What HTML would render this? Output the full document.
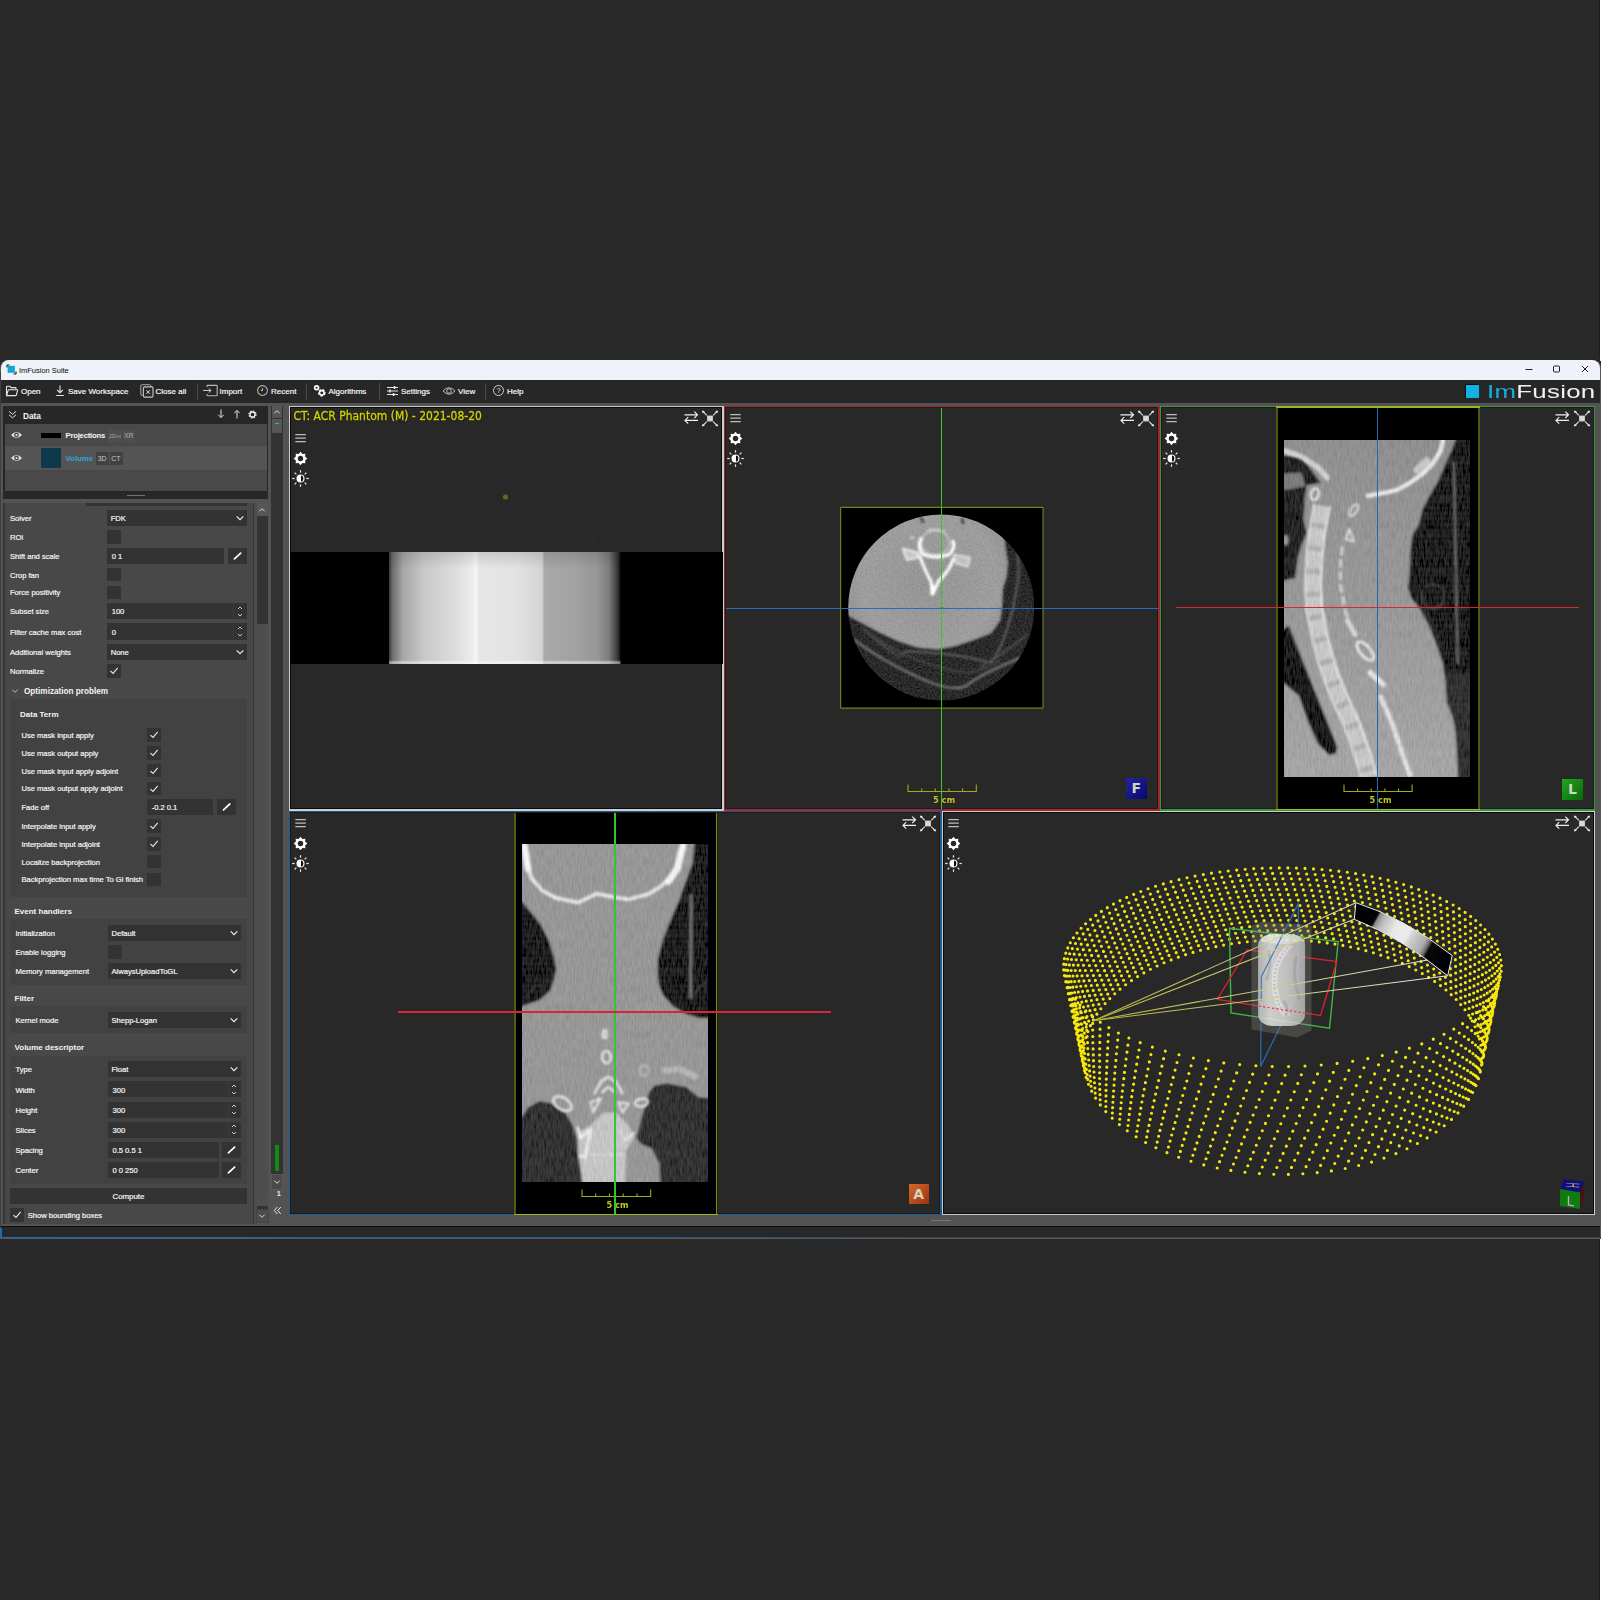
<!DOCTYPE html>
<html lang="en"><head><meta charset="utf-8"><title>ImFusion Suite</title>
<style>
html,body{margin:0;padding:0}
body{width:1601px;height:1600px;background:#282828;position:relative;overflow:hidden;font-family:"Liberation Sans",sans-serif;}
div,span,svg{position:absolute;display:block}
.t{font-size:7.6px;line-height:12px;color:#fafafa;white-space:nowrap;letter-spacing:-0.02px;-webkit-text-stroke:0.2px #f0f0f0}
.tb{font-size:8px;line-height:12px;color:#f8f8f8;white-space:nowrap;-webkit-text-stroke:0.2px #f0f0f0}
.h{font-size:8.1px;line-height:12px;color:#f4f4f4;white-space:nowrap;font-weight:bold}
.dv{font-family:"DejaVu Sans",sans-serif;white-space:nowrap}
</style></head>
<body>
<div style="left:0px;top:360px;width:1601px;height:878.7px;background:#585858;border-radius:8px 8px 0 0"></div>
<div style="left:0px;top:372px;width:1px;height:866px;background:#404040;"></div>
<div style="left:1px;top:360px;width:1599px;height:878px;background:#535353;border-radius:8px 8px 0 0"></div>
<div style="left:1px;top:360px;width:1599px;height:19.6px;background:#eff3f9;border-radius:8px 8px 0 0"></div>
<svg style="left:6px;top:364px;" width="11" height="11" viewBox="0 0 11 11"><path d="M1 1l2.5 0M1 1l0 2.5M10 10l-2.5 0M10 10l0-2.5" stroke="#222" stroke-width="1.2" fill="none"/><rect x="1.6" y="1.8" width="7.3" height="7" fill="#10a8d8"/></svg>
<span class="t" style="left:19px;top:364.80px;color:#0a0a0a;font-size:7.5px;-webkit-text-stroke:0">ImFusion Suite</span>
<svg style="left:1520px;top:361.3px;" width="75" height="16" viewBox="0 0 75 16"><path d="M5.5 8.5h7" stroke="#222" stroke-width="1"/><rect x="33.5" y="5" width="6" height="6" rx="1" fill="none" stroke="#222" stroke-width="1"/><path d="M62 5l6 6M68 5l-6 6" stroke="#222" stroke-width="1"/></svg>
<div style="left:1px;top:379.6px;width:1599px;height:23.4px;background:#272727;"></div>
<svg style="left:5px;top:384px;" width="14" height="14" viewBox="0 0 14 14"><path d="M1.5 11.5V3.2q0-.9.9-.9h2.4l1.2 1.3h4.2q.8 0 .8.8v1" fill="none" stroke="#e8e8e8" stroke-width="1.1"/><path d="M1.6 11.6l1.5-5.2q.2-.6.9-.6h8q.9 0 .6.9l-1.3 4.3q-.2.6-.9.6z" fill="none" stroke="#e8e8e8" stroke-width="1.1"/></svg>
<span class="tb" style="left:21px;top:386.10px;">Open</span>
<svg style="left:54px;top:384px;" width="12" height="14" viewBox="0 0 12 14"><path d="M6 1.5v7M3.2 6L6 8.8 8.8 6M2.2 11.5h7.6" fill="none" stroke="#e8e8e8" stroke-width="1.1"/></svg>
<span class="tb" style="left:68px;top:386.10px;">Save Workspace</span>
<svg style="left:139px;top:383px;" width="16" height="16" viewBox="0 0 16 16"><path d="M4.300 12.300h-1.200q-1.300 0 -1.300 -1.300v-8q0 -1.300 1.300 -1.300h7.400q1.300 0 1.300 1.300v.8" fill="none" stroke="#a8a8a8" stroke-width="1"/><rect x="4.400" y="3.900" width="9.600" height="10.200" rx="1.400" fill="none" stroke="#c8c8c8" stroke-width="1.100"/><path d="M7.400 7.200l3.600 3.600M11 7.200l-3.600 3.600" stroke="#e0e0e0" stroke-width="1"/></svg>
<span class="tb" style="left:155.5px;top:386.10px;">Close all</span>
<div style="left:197px;top:383px;width:1px;height:17px;background:#4a4a4a;"></div>
<svg style="left:202px;top:383px;" width="17" height="16" viewBox="0 0 17 16"><path d="M5 4V3.200q0-.8.800-.8h8.600q.8 0 .8.800v8.800q0 .8-.8.800H5.800q-.8 0-.8-.8V11" fill="none" stroke="#b8b8b8" stroke-width="1.100"/><path d="M1 7.500h8M6.800 5.500l2 2L6.800 9.500" fill="none" stroke="#c8c8c8" stroke-width="1.050"/></svg>
<span class="tb" style="left:219.5px;top:386.10px;">Import</span>
<svg style="left:256px;top:384px;" width="13" height="13" viewBox="0 0 13 13"><circle cx="6.500" cy="6.500" r="4.900" fill="none" stroke="#b4b4b4" stroke-width="1.050"/><path d="M6.500 4.200v2.400h-1.700" fill="none" stroke="#c4c4c4" stroke-width="1"/></svg>
<span class="tb" style="left:271px;top:386.10px;">Recent</span>
<div style="left:306px;top:383px;width:1px;height:17px;background:#4a4a4a;"></div>
<svg style="left:313px;top:384px;" width="14" height="14" viewBox="0 0 14 14"><circle cx="3.600" cy="3.800" r="1.900" fill="none" stroke="#fff" stroke-width="1.700"/><circle cx="8.800" cy="8.800" r="2.700" fill="none" stroke="#fff" stroke-width="2.200" stroke-dasharray="2.100 1.100"/><circle cx="8.800" cy="8.800" r="2.300" fill="none" stroke="#fff" stroke-width="1.400"/></svg>
<span class="tb" style="left:328.5px;top:386.10px;">Algorithms</span>
<div style="left:379px;top:383px;width:1px;height:17px;background:#4a4a4a;"></div>
<svg style="left:386px;top:384px;" width="13" height="14" viewBox="0 0 13 14"><path d="M1 3.500h11M1 7h11M1 10.500h11" stroke="#e8e8e8" stroke-width="1"/><path d="M8.500 2v3M4 5.500v3M7.500 9v3" stroke="#e8e8e8" stroke-width="1.600"/></svg>
<span class="tb" style="left:401px;top:386.10px;">Settings</span>
<svg style="left:442px;top:385px;" width="14" height="12" viewBox="0 0 14 12"><path d="M1 6Q7 -0.500 13 6Q7 12.500 1 6z" fill="none" stroke="#b8b8b8" stroke-width="1"/><circle cx="7" cy="6" r="2.200" fill="none" stroke="#b8b8b8" stroke-width="1"/></svg>
<span class="tb" style="left:458px;top:386.10px;">View</span>
<div style="left:485px;top:383px;width:1px;height:17px;background:#4a4a4a;"></div>
<svg style="left:492px;top:384px;" width="13" height="13" viewBox="0 0 13 13"><circle cx="6.500" cy="6.500" r="5" fill="none" stroke="#d0d0d0" stroke-width="1"/><text x="6.500" y="9.300" font-size="7.500" font-family="Liberation Sans, sans-serif" fill="#e0e0e0" text-anchor="middle">?</text></svg>
<span class="tb" style="left:507px;top:386.10px;">Help</span>
<div style="left:1465.5px;top:384.5px;width:13px;height:13px;background:#0fb2e2;box-shadow:-1px -1px 1px rgba(0,0,0,.6)"></div>
<span style="left:1487px;top:380.2px;font-size:18.2px;line-height:24px;white-space:nowrap;transform-origin:0 0;transform:scaleX(1.42);letter-spacing:0.2px"><span style="position:static;display:inline;color:#13b1e4">Im</span><span style="position:static;display:inline;color:#f2f2f2">Fusion</span></span>
<div style="left:1px;top:1226px;width:1599px;height:11.5px;background:#282828;"></div>
<div style="left:1px;top:1226px;width:1598.7px;height:1px;background:#0e0e0e;"></div>
<div style="left:1600px;top:0px;width:1px;height:360.5px;background:#fff;"></div>
<div style="left:1599px;top:0px;width:1px;height:358px;background:#1b1b1b;"></div>
<div style="left:1600px;top:1238.8px;width:1px;height:362px;background:#fff;"></div>
<div style="left:1599px;top:1240px;width:1px;height:360px;background:#1b1b1b;"></div>
<div style="left:0px;top:1237px;width:1601px;height:1.2px;background:linear-gradient(90deg,#1c6db0 0,#1c5f96 35%,#3a4650 60%,#454545 100%);"></div>
<div style="left:0px;top:1228px;width:1.5px;height:10px;background:#1c6db0;border-radius:0 0 0 3px"></div>
<div style="left:931px;top:1219.5px;width:20px;height:1px;background:#777;"></div>
<div style="left:3.3px;top:405.5px;width:264.7px;height:93.2px;background:#272727;"></div>
<div style="left:4.7px;top:424px;width:262.4px;height:67px;background:#494949;"></div>
<div style="left:4.7px;top:447px;width:262.4px;height:22.5px;background:#545454;"></div>
<div style="left:4.7px;top:446.3px;width:262.4px;height:0.7px;background:#505050;"></div>
<div style="left:127px;top:494.6px;width:18px;height:1.3px;background:#707070;"></div>
<svg style="left:7px;top:409px;" width="11" height="11" viewBox="0 0 11 11"><path d="M2 2.300L5.500 5.300L9 2.300M2 5.800L5.500 8.800L9 5.800" fill="none" stroke="#ddd" stroke-width="1"/></svg>
<span class="h" style="left:23px;top:409.70px;font-size:8.300px">Data</span>
<svg style="left:215px;top:408px;" width="12" height="12" viewBox="0 0 12 12"><path d="M6 1.500v8M3.300 6.800L6 9.600L8.700 6.800" fill="none" stroke="#e0e0e0" stroke-width="1"/></svg>
<svg style="left:231px;top:408px;" width="12" height="12" viewBox="0 0 12 12"><path d="M6 10.500v-8M3.300 5.200L6 2.400L8.700 5.200" fill="none" stroke="#e0e0e0" stroke-width="1"/></svg>
<svg style="left:246px;top:408px;" width="13" height="13" viewBox="0 0 13 13"><circle cx="6.500" cy="6.500" r="3.300" fill="none" stroke="#e8e8e8" stroke-width="1.700" stroke-dasharray="1.400 1.190"/><circle cx="6.500" cy="6.500" r="2.500" fill="none" stroke="#e8e8e8" stroke-width="1.300"/></svg>
<svg style="left:10px;top:430px;" width="13" height="10" viewBox="0 0 13 10"><path d="M1 5Q6.500 -1 12 5Q6.500 11 1 5z" fill="#e4e4e4"/><circle cx="6.500" cy="5" r="2.400" fill="#494949"/><circle cx="6.500" cy="5" r="1.100" fill="#e4e4e4"/></svg>
<svg style="left:10px;top:453px;" width="13" height="10" viewBox="0 0 13 10"><path d="M1 5Q6.500 -1 12 5Q6.500 11 1 5z" fill="#e4e4e4"/><circle cx="6.500" cy="5" r="2.400" fill="#494949"/><circle cx="6.500" cy="5" r="1.100" fill="#e4e4e4"/></svg>
<div style="left:41px;top:433.1px;width:20px;height:4.8px;background:#000;"></div>
<div style="left:41px;top:448.3px;width:20px;height:20px;background:#0f384c;"></div>
<span class="h" style="left:65.5px;top:429.90px;font-size:7.800px;letter-spacing:-0.27px">Projections</span>
<div style="left:108px;top:429.5px;width:13px;height:12px;background:#4f4f4f;"></div>
<span class="t" style="left:109px;top:430.20px;font-size:5.600px;color:#a0a0a0;-webkit-text-stroke:0">2D+t</span>
<div style="left:122.5px;top:429.5px;width:12px;height:12px;background:#4f4f4f;"></div>
<span class="t" style="left:124px;top:430.20px;font-size:6.800px;color:#b0b0b0;-webkit-text-stroke:0">XR</span>
<span class="h" style="left:65.5px;top:452.80px;font-size:7.800px;color:#2fa4dc">Volume</span>
<div style="left:96px;top:452px;width:12.5px;height:12.5px;background:#414141;"></div>
<span class="t" style="left:97.7px;top:453.20px;font-size:7px;color:#c8c8c8;-webkit-text-stroke:0">3D</span>
<div style="left:110px;top:452px;width:12.5px;height:12.5px;background:#414141;"></div>
<span class="t" style="left:111.3px;top:453.20px;font-size:7px;color:#c8c8c8;-webkit-text-stroke:0">CT</span>
<div style="left:3.3px;top:502.8px;width:250.7px;height:721.4px;background:#363636;"></div>
<div style="left:4.5px;top:502.8px;width:248px;height:721.4px;background:#484848;"></div>
<div style="left:86px;top:502.8px;width:161px;height:2.8px;background:#333;"></div>
<div style="left:254px;top:502.8px;width:2.6px;height:721.4px;background:#4d4d4d;"></div>
<div style="left:256.6px;top:503.4px;width:11.5px;height:719px;background:#4e4e4e;"></div>
<div style="left:256.6px;top:503.4px;width:11.5px;height:12.3px;background:#565656;"></div>
<svg style="left:257.4px;top:505.8px;" width="10" height="8" viewBox="0 0 10 8"><path d="M2.4 5.3L5 2.7L7.6 5.3" fill="none" stroke="#ddd" stroke-width="1"/></svg>
<div style="left:256.6px;top:516px;width:11.5px;height:108px;background:#333;"></div>
<div style="left:256.6px;top:1205.5px;width:11.5px;height:4px;background:#333;"></div>
<div style="left:256.6px;top:1209.5px;width:11.5px;height:12.5px;background:#4c4c4c;outline:0.500px solid #444"></div>
<svg style="left:257.4px;top:1212px;" width="10" height="8" viewBox="0 0 10 8"><path d="M2.4 2.7L5 5.3L7.6 2.7" fill="none" stroke="#ddd" stroke-width="1"/></svg>
<div style="left:271px;top:405.5px;width:12px;height:820px;background:#333;"></div>
<div style="left:271.7px;top:405.7px;width:10.6px;height:12.3px;background:#565656;"></div>
<svg style="left:272px;top:407.7px;" width="10" height="8" viewBox="0 0 10 8"><path d="M2.4 5.3L5 2.7L7.6 5.3" fill="none" stroke="#ddd" stroke-width="1"/></svg>
<div style="left:271.7px;top:419px;width:10.6px;height:13.6px;background:#565656;"></div>
<div style="left:274.8px;top:422.9px;width:4.3px;height:1.5px;background:#19b4e6;"></div>
<div style="left:275px;top:1145px;width:3.8px;height:25.5px;background:#138a13;"></div>
<div style="left:271.7px;top:1174.6px;width:10.6px;height:14px;background:#4a4a4a;outline:0.600px solid #5a5a5a"></div>
<svg style="left:272px;top:1177.7px;" width="10" height="8" viewBox="0 0 10 8"><path d="M2.4 2.7L5 5.3L7.6 2.7" fill="none" stroke="#ddd" stroke-width="1"/></svg>
<div style="left:271px;top:1189.5px;width:12px;height:36px;background:#535353;"></div>
<span class="t" style="left:276.8px;top:1188.00px;font-size:7.500px">1</span>
<svg style="left:272px;top:1205px;" width="11" height="11" viewBox="0 0 11 11"><path d="M5.300 2L2.300 5.500L5.300 9M8.800 2L5.800 5.500L8.800 9" fill="none" stroke="#e8e8e8" stroke-width="1"/></svg>
<span class="t" style="left:10px;top:512.70px;">Solver</span>
<div style="left:107.2px;top:510px;width:139.7px;height:15.7px;background:#333333;"></div>
<span class="t" style="left:110.7px;top:513.05px;">FDK</span>
<svg style="left:234.89999999999998px;top:514.15px;" width="10" height="8" viewBox="0 0 10 8"><path d="M1.7000000000000002 2.35L5 5.65L8.3 2.35" fill="none" stroke="#f2f2f2" stroke-width="1.1"/></svg>
<span class="t" style="left:10px;top:531.70px;">ROI</span>
<div style="left:107.2px;top:530px;width:14px;height:13.6px;background:#333333;"></div>
<span class="t" style="left:10px;top:550.50px;">Shift and scale</span>
<div style="left:107.2px;top:547.6px;width:116.8px;height:16.1px;background:#333333;"></div>
<span class="t" style="left:111.7px;top:550.85px;">0 1</span>
<div style="left:228.1px;top:547.6px;width:18.8px;height:16.1px;background:#333333;"></div>
<svg style="left:228.1px;top:547.6px;" width="18.8" height="16.1" viewBox="0 0 18.8 16.1"><path d="M6.4 10.850000000000001L12.7 5.050000000000001" stroke="#fff" stroke-width="1.700" stroke-linecap="round"/></svg>
<span class="t" style="left:10px;top:569.70px;">Crop fan</span>
<div style="left:107.2px;top:567.8px;width:14px;height:13.7px;background:#333333;"></div>
<span class="t" style="left:10px;top:587.30px;">Force positivity</span>
<div style="left:107.2px;top:585.6px;width:14px;height:13.3px;background:#333333;"></div>
<span class="t" style="left:10px;top:606.00px;">Subset size</span>
<div style="left:107.2px;top:603px;width:139.7px;height:16.4px;background:#333333;"></div>
<span class="t" style="left:111.7px;top:606.40px;">100</span>
<div style="left:233.39999999999998px;top:604px;width:0.7px;height:14.399999999999999px;background:#3d3d3d;"></div>
<svg style="left:234.89999999999998px;top:603.8000000000001px;" width="10" height="8" viewBox="0 0 10 8"><path d="M3 5.0L5 3.0L7 5.0" fill="none" stroke="#d8d8d8" stroke-width="0.9"/></svg>
<svg style="left:234.89999999999998px;top:610.8000000000001px;" width="10" height="8" viewBox="0 0 10 8"><path d="M3 3.0L5 5.0L7 3.0" fill="none" stroke="#d8d8d8" stroke-width="0.9"/></svg>
<span class="t" style="left:10px;top:626.50px;">Filter cache max cost</span>
<div style="left:107.2px;top:623.3px;width:139.7px;height:16.3px;background:#333333;"></div>
<span class="t" style="left:111.7px;top:626.65px;">0</span>
<div style="left:233.39999999999998px;top:624.3px;width:0.7px;height:14.3px;background:#3d3d3d;"></div>
<svg style="left:234.89999999999998px;top:624.05px;" width="10" height="8" viewBox="0 0 10 8"><path d="M3 5.0L5 3.0L7 5.0" fill="none" stroke="#d8d8d8" stroke-width="0.9"/></svg>
<svg style="left:234.89999999999998px;top:631.05px;" width="10" height="8" viewBox="0 0 10 8"><path d="M3 3.0L5 5.0L7 3.0" fill="none" stroke="#d8d8d8" stroke-width="0.9"/></svg>
<span class="t" style="left:10px;top:646.70px;">Additional weights</span>
<div style="left:107.2px;top:643.7px;width:139.7px;height:15.9px;background:#333333;"></div>
<span class="t" style="left:110.7px;top:646.85px;">None</span>
<svg style="left:234.89999999999998px;top:647.95px;" width="10" height="8" viewBox="0 0 10 8"><path d="M1.7000000000000002 2.35L5 5.65L8.3 2.35" fill="none" stroke="#f2f2f2" stroke-width="1.1"/></svg>
<span class="t" style="left:10px;top:665.70px;">Normalize</span>
<div style="left:107.2px;top:664.3px;width:14px;height:13.3px;background:#333333;"></div>
<svg style="left:107.2px;top:664.3px;" width="14" height="13.3" viewBox="0 0 14 13.3"><path d="M3.400 6.95L6 9.350000000000001L10.700 3.8500000000000005" fill="none" stroke="#e8e8e8" stroke-width="1.100"/></svg>
<svg style="left:9.5px;top:687px;" width="10" height="8" viewBox="0 0 10 8"><path d="M2.4 2.7L5 5.3L7.6 2.7" fill="none" stroke="#ccc" stroke-width="0.9"/></svg>
<span class="h" style="left:24px;top:685.80px;font-size:8.200px">Optimization problem</span>
<div style="left:10px;top:699px;width:237px;height:198px;background:#424242;"></div>
<span class="h" style="left:20px;top:709.10px;font-size:8px">Data Term</span>
<span class="t" style="left:21.5px;top:730.10px;">Use mask input apply</span>
<div style="left:147.2px;top:728.3px;width:13.8px;height:13.5px;background:#333333;"></div>
<svg style="left:147.2px;top:728.3px;" width="13.8" height="13.5" viewBox="0 0 13.8 13.5"><path d="M3.400 7.05L6 9.45L10.700 3.95" fill="none" stroke="#e8e8e8" stroke-width="1.100"/></svg>
<span class="t" style="left:21.5px;top:747.80px;">Use mask output apply</span>
<div style="left:147.2px;top:746px;width:13.8px;height:13.5px;background:#333333;"></div>
<svg style="left:147.2px;top:746px;" width="13.8" height="13.5" viewBox="0 0 13.8 13.5"><path d="M3.400 7.05L6 9.45L10.700 3.95" fill="none" stroke="#e8e8e8" stroke-width="1.100"/></svg>
<span class="t" style="left:21.5px;top:765.60px;">Use mask input apply adjoint</span>
<div style="left:147.2px;top:763.8px;width:13.8px;height:13.5px;background:#333333;"></div>
<svg style="left:147.2px;top:763.8px;" width="13.8" height="13.5" viewBox="0 0 13.8 13.5"><path d="M3.400 7.05L6 9.45L10.700 3.95" fill="none" stroke="#e8e8e8" stroke-width="1.100"/></svg>
<span class="t" style="left:21.5px;top:783.30px;">Use mask output apply adjoint</span>
<div style="left:147.2px;top:781.5px;width:13.8px;height:13.5px;background:#333333;"></div>
<svg style="left:147.2px;top:781.5px;" width="13.8" height="13.5" viewBox="0 0 13.8 13.5"><path d="M3.400 7.05L6 9.45L10.700 3.95" fill="none" stroke="#e8e8e8" stroke-width="1.100"/></svg>
<span class="t" style="left:21.5px;top:802.00px;">Fade off</span>
<div style="left:147.2px;top:799.2px;width:65.6px;height:16px;background:#333333;"></div>
<span class="t" style="left:151.7px;top:802.40px;">-0.2 0.1</span>
<div style="left:216.6px;top:799.2px;width:19px;height:16px;background:#333333;"></div>
<svg style="left:216.6px;top:799.2px;" width="19" height="16" viewBox="0 0 19 16"><path d="M6.5 10.8L12.8 5.0" stroke="#fff" stroke-width="1.700" stroke-linecap="round"/></svg>
<span class="t" style="left:21.5px;top:821.10px;">Interpolate input apply</span>
<div style="left:147.2px;top:819.3px;width:13.8px;height:13.5px;background:#333333;"></div>
<svg style="left:147.2px;top:819.3px;" width="13.8" height="13.5" viewBox="0 0 13.8 13.5"><path d="M3.400 7.05L6 9.45L10.700 3.95" fill="none" stroke="#e8e8e8" stroke-width="1.100"/></svg>
<span class="t" style="left:21.5px;top:838.80px;">Interpolate input adjoint</span>
<div style="left:147.2px;top:837px;width:13.8px;height:13.5px;background:#333333;"></div>
<svg style="left:147.2px;top:837px;" width="13.8" height="13.5" viewBox="0 0 13.8 13.5"><path d="M3.400 7.05L6 9.45L10.700 3.95" fill="none" stroke="#e8e8e8" stroke-width="1.100"/></svg>
<span class="t" style="left:21.5px;top:856.50px;">Localize backprojection</span>
<div style="left:147.2px;top:854.7px;width:13.8px;height:13.5px;background:#333333;"></div>
<span class="t" style="left:21.5px;top:874.30px;">Backprojection max time To Gl finish</span>
<div style="left:147.2px;top:872.5px;width:13.8px;height:13.5px;background:#333333;"></div>
<span class="h" style="left:14.5px;top:905.50px;font-size:8px">Event handlers</span>
<div style="left:10px;top:919px;width:237px;height:65.5px;background:#424242;"></div>
<span class="t" style="left:15.5px;top:927.90px;">Initialization</span>
<div style="left:108px;top:924.5px;width:133px;height:16px;background:#333333;"></div>
<span class="t" style="left:111.5px;top:927.70px;">Default</span>
<svg style="left:229px;top:928.8px;" width="10" height="8" viewBox="0 0 10 8"><path d="M1.7000000000000002 2.35L5 5.65L8.3 2.35" fill="none" stroke="#f2f2f2" stroke-width="1.1"/></svg>
<span class="t" style="left:15.5px;top:946.90px;">Enable logging</span>
<div style="left:108px;top:945px;width:14px;height:13.5px;background:#333333;"></div>
<span class="t" style="left:15.5px;top:965.90px;">Memory management</span>
<div style="left:108px;top:962.5px;width:133px;height:16px;background:#333333;"></div>
<span class="t" style="left:111.5px;top:965.70px;">AlwaysUploadToGL</span>
<svg style="left:229px;top:966.8px;" width="10" height="8" viewBox="0 0 10 8"><path d="M1.7000000000000002 2.35L5 5.65L8.3 2.35" fill="none" stroke="#f2f2f2" stroke-width="1.1"/></svg>
<span class="h" style="left:14.5px;top:992.50px;font-size:8px">Filter</span>
<div style="left:10px;top:1006.3px;width:237px;height:27.2px;background:#424242;"></div>
<span class="t" style="left:15.5px;top:1015.10px;">Kernel mode</span>
<div style="left:108px;top:1012px;width:133px;height:16px;background:#333333;"></div>
<span class="t" style="left:111.5px;top:1015.20px;">Shepp-Logan</span>
<svg style="left:229px;top:1016.3px;" width="10" height="8" viewBox="0 0 10 8"><path d="M1.7000000000000002 2.35L5 5.65L8.3 2.35" fill="none" stroke="#f2f2f2" stroke-width="1.1"/></svg>
<span class="h" style="left:14.5px;top:1041.90px;font-size:8px">Volume descriptor</span>
<div style="left:10px;top:1055.6px;width:237px;height:128.4px;background:#424242;"></div>
<span class="t" style="left:15.5px;top:1064.30px;">Type</span>
<div style="left:108px;top:1061px;width:133px;height:16px;background:#333333;"></div>
<span class="t" style="left:111.5px;top:1064.20px;">Float</span>
<svg style="left:229px;top:1065.3px;" width="10" height="8" viewBox="0 0 10 8"><path d="M1.7000000000000002 2.35L5 5.65L8.3 2.35" fill="none" stroke="#f2f2f2" stroke-width="1.1"/></svg>
<span class="t" style="left:15.5px;top:1084.50px;">Width</span>
<div style="left:108px;top:1081.4px;width:133px;height:16px;background:#333333;"></div>
<span class="t" style="left:112.5px;top:1084.60px;">300</span>
<div style="left:227.5px;top:1082.4px;width:0.7px;height:14px;background:#3d3d3d;"></div>
<svg style="left:229px;top:1082.0px;" width="10" height="8" viewBox="0 0 10 8"><path d="M3 5.0L5 3.0L7 5.0" fill="none" stroke="#d8d8d8" stroke-width="0.9"/></svg>
<svg style="left:229px;top:1089.0px;" width="10" height="8" viewBox="0 0 10 8"><path d="M3 3.0L5 5.0L7 3.0" fill="none" stroke="#d8d8d8" stroke-width="0.9"/></svg>
<span class="t" style="left:15.5px;top:1104.70px;">Height</span>
<div style="left:108px;top:1101.6px;width:133px;height:16px;background:#333333;"></div>
<span class="t" style="left:112.5px;top:1104.80px;">300</span>
<div style="left:227.5px;top:1102.6px;width:0.7px;height:14px;background:#3d3d3d;"></div>
<svg style="left:229px;top:1102.1999999999998px;" width="10" height="8" viewBox="0 0 10 8"><path d="M3 5.0L5 3.0L7 5.0" fill="none" stroke="#d8d8d8" stroke-width="0.9"/></svg>
<svg style="left:229px;top:1109.1999999999998px;" width="10" height="8" viewBox="0 0 10 8"><path d="M3 3.0L5 5.0L7 3.0" fill="none" stroke="#d8d8d8" stroke-width="0.9"/></svg>
<span class="t" style="left:15.5px;top:1124.80px;">Slices</span>
<div style="left:108px;top:1121.8px;width:133px;height:16px;background:#333333;"></div>
<span class="t" style="left:112.5px;top:1125.00px;">300</span>
<div style="left:227.5px;top:1122.8px;width:0.7px;height:14px;background:#3d3d3d;"></div>
<svg style="left:229px;top:1122.3999999999999px;" width="10" height="8" viewBox="0 0 10 8"><path d="M3 5.0L5 3.0L7 5.0" fill="none" stroke="#d8d8d8" stroke-width="0.9"/></svg>
<svg style="left:229px;top:1129.3999999999999px;" width="10" height="8" viewBox="0 0 10 8"><path d="M3 3.0L5 5.0L7 3.0" fill="none" stroke="#d8d8d8" stroke-width="0.9"/></svg>
<span class="t" style="left:15.5px;top:1145.00px;">Spacing</span>
<div style="left:108px;top:1142px;width:110.5px;height:16px;background:#333333;"></div>
<span class="t" style="left:112.5px;top:1145.20px;">0.5 0.5 1</span>
<div style="left:222.3px;top:1142px;width:18.7px;height:16px;background:#333333;"></div>
<svg style="left:222.3px;top:1142px;" width="18.7" height="16" viewBox="0 0 18.7 16"><path d="M6.35 10.8L12.649999999999999 5.0" stroke="#fff" stroke-width="1.700" stroke-linecap="round"/></svg>
<span class="t" style="left:15.5px;top:1165.20px;">Center</span>
<div style="left:108px;top:1162.2px;width:110.5px;height:16px;background:#333333;"></div>
<span class="t" style="left:112.5px;top:1165.40px;">0 0 250</span>
<div style="left:222.3px;top:1162.2px;width:18.7px;height:16px;background:#333333;"></div>
<svg style="left:222.3px;top:1162.2px;" width="18.7" height="16" viewBox="0 0 18.7 16"><path d="M6.35 10.8L12.649999999999999 5.0" stroke="#fff" stroke-width="1.700" stroke-linecap="round"/></svg>
<div style="left:10px;top:1188px;width:237px;height:16px;background:#333;"></div>
<span class="t" style="left:112.5px;top:1191.10px;font-size:7.900px">Compute</span>
<div style="left:10px;top:1208.2px;width:14px;height:13.5px;background:#333333;"></div>
<svg style="left:10px;top:1208.2px;" width="14" height="13.5" viewBox="0 0 14 13.5"><path d="M3.400 7.05L6 9.45L10.700 3.95" fill="none" stroke="#e8e8e8" stroke-width="1.100"/></svg>
<span class="t" style="left:27.8px;top:1210.10px;">Show bounding boxes</span>
<div style="left:288.5px;top:406px;width:435px;height:404.5px;background:#cdcdcd"></div>
<div style="left:289.75px;top:407.25px;width:432.5px;height:402.0px;background:#0a0a0a"></div>
<div style="left:290.55px;top:408.05px;width:430.9px;height:400.4px;background:#282828;overflow:hidden"></div>
<svg style="left:290px;top:407.5px;" width="432" height="401.5" viewBox="0 0 432 401.5"><g stroke="#4a4a20" stroke-width="0.800" stroke-dasharray="1 3.500" opacity=".55" fill="none"><path d="M105 0L182 401M156.300 0L68 401M273.700 0L361.800 401M327.500 0L253.500 401"/></g><circle cx="215.500" cy="89" r="2.600" fill="#66661c"/></svg>
<svg style="left:290px;top:551.8px;" width="432.5" height="112.4" viewBox="0 0 432.5 112.4"><defs><linearGradient id="pg" x1="0" x2="1" y1="0" y2="0"><stop offset="0" stop-color="#3a3a3a"/><stop offset="0.015" stop-color="#6c6c6c"/><stop offset="0.060" stop-color="#a6a6a6"/><stop offset="0.150" stop-color="#c8c8c8"/><stop offset="0.280" stop-color="#dcdcdc"/><stop offset="0.360" stop-color="#ececec"/><stop offset="0.375" stop-color="#f6f6f6"/><stop offset="0.390" stop-color="#e6e6e6"/><stop offset="0.550" stop-color="#e2e2e2"/><stop offset="0.660" stop-color="#d4d4d4"/><stop offset="0.672" stop-color="#a8a8a8"/><stop offset="0.800" stop-color="#a2a2a2"/><stop offset="0.900" stop-color="#969696"/><stop offset="0.950" stop-color="#7c7c7c"/><stop offset="0.985" stop-color="#3c3c3c"/><stop offset="1" stop-color="#101010"/></linearGradient><linearGradient id="pv" x1="0" x2="0" y1="0" y2="1"><stop offset="0" stop-color="#000" stop-opacity=".12"/><stop offset="0.150" stop-color="#000" stop-opacity="0"/><stop offset="0.960" stop-color="#fff" stop-opacity="0"/><stop offset="0.985" stop-color="#fff" stop-opacity=".55"/><stop offset="1" stop-color="#fff" stop-opacity=".2"/></linearGradient></defs><rect x="0" y="0" width="434" height="112.400" fill="#000"/><rect x="99" y="0" width="231.500" height="112.400" fill="url(#pg)"/><rect x="99" y="0" width="231.500" height="112.400" fill="url(#pv)"/></svg>
<span class="dv" style="left:293.500px;top:408.500px;font-size:10.750px;line-height:14px;color:#dada00;letter-spacing:0.020px;-webkit-text-stroke:0.3px #c8c800;transform-origin:0 0;transform:scaleY(1.07);text-shadow:0 0 1.5px #00002a">CT: ACR Phantom (M) - 2021-08-20</span>
<svg style="left:293.7px;top:433px;" width="14" height="11" viewBox="0 0 14 11"><path d="M1.300 1.700h10.500M1.300 5.200h10.500M1.300 8.700h10.500" stroke="#bdbdbd" stroke-width="1.250"/></svg>
<svg style="left:292.7px;top:450.7px;" width="15" height="15" viewBox="0 0 15 15"><g transform="translate(7.500 7.500)"><path d="M0.00 -6.80L1.91 -4.62L4.81 -4.81L4.62 -1.91L6.80 -0.00L4.62 1.91L4.81 4.81L1.91 4.62L0.00 6.80L-1.91 4.62L-4.81 4.81L-4.62 1.91L-6.80 0.00L-4.62 -1.91L-4.81 -4.81L-1.91 -4.62zM2.700 0A2.700 2.700 0 1 0 -2.700 0A2.700 2.700 0 1 0 2.700 0z" fill="#fff" fill-rule="evenodd"/></g></svg>
<svg style="left:290.7px;top:468.5px;" width="19" height="19" viewBox="0 0 19 19"><g transform="translate(9.500 9.500)"><path d="M0 -5.900V-8.300" transform="rotate(0)" stroke="#eee" stroke-width="1.200"/><path d="M0 -5.900V-8.300" transform="rotate(45)" stroke="#eee" stroke-width="1.200"/><path d="M0 -5.900V-8.300" transform="rotate(90)" stroke="#eee" stroke-width="1.200"/><path d="M0 -5.900V-8.300" transform="rotate(135)" stroke="#eee" stroke-width="1.200"/><path d="M0 -5.900V-8.300" transform="rotate(180)" stroke="#eee" stroke-width="1.200"/><path d="M0 -5.900V-8.300" transform="rotate(225)" stroke="#eee" stroke-width="1.200"/><path d="M0 -5.900V-8.300" transform="rotate(270)" stroke="#eee" stroke-width="1.200"/><path d="M0 -5.900V-8.300" transform="rotate(315)" stroke="#eee" stroke-width="1.200"/><circle r="4" fill="#fff"/><path d="M0.500 -3.100A2.300 3.100 0 0 1 0.500 3.100z" fill="#111"/></g></svg>
<svg style="left:682.5px;top:410.4px;" width="17" height="15" viewBox="0 0 17 15"><path d="M1.500 4.800H14.500M11.300 1.600L14.500 4.800L11.300 8M15 10.400H2M5.200 7.200L2 10.400L5.200 13.600" fill="none" stroke="#f0f0f0" stroke-width="1.150"/></svg>
<svg style="left:700.4px;top:407.75px;" width="20" height="20" viewBox="0 0 20 20"><g transform="translate(10 10.500)"><g transform="rotate(0)"><path d="M3.200 -3.200L7.400 -7.400" stroke="#e8e8e8" stroke-width="1.100"/><path d="M8.100 -8.100L5.200 -7.300L7.300 -5.200z" fill="#e8e8e8"/></g><g transform="rotate(90)"><path d="M3.200 -3.200L7.400 -7.400" stroke="#e8e8e8" stroke-width="1.100"/><path d="M8.100 -8.100L5.200 -7.300L7.300 -5.200z" fill="#e8e8e8"/></g><g transform="rotate(180)"><path d="M3.200 -3.200L7.400 -7.400" stroke="#e8e8e8" stroke-width="1.100"/><path d="M8.100 -8.100L5.200 -7.300L7.300 -5.200z" fill="#e8e8e8"/></g><g transform="rotate(270)"><path d="M3.200 -3.200L7.400 -7.400" stroke="#e8e8e8" stroke-width="1.100"/><path d="M8.100 -8.100L5.200 -7.300L7.300 -5.200z" fill="#e8e8e8"/></g><rect x="-2.900" y="-2.900" width="5.800" height="5.800" fill="#d8d8d8"/></g></svg>
<div style="left:724px;top:406px;width:435.5px;height:404.5px;background:#a3282c"></div>
<div style="left:725.4px;top:407.4px;width:432.7px;height:401.7px;background:#1b1b1b"></div>
<div style="left:726.1999999999999px;top:408.2px;width:431.09999999999997px;height:400.09999999999997px;background:#282828;overflow:hidden"></div>
<svg style="left:840px;top:505px;" width="205" height="205" viewBox="0 0 205 205"><defs><clipPath id="axc"><circle cx="790" cy="800" r="726"/></clipPath>
<filter id="b6" x="-20%" y="-20%" width="140%" height="140%"><feGaussianBlur stdDeviation="9"/></filter>
<filter id="grv" x="0" y="0" width="100%" height="100%"><feTurbulence type="fractalNoise" baseFrequency="0.075 0.014" numOctaves="2" seed="7" result="n"/><feColorMatrix in="n" type="matrix" values="1 0 0 0 0 1 0 0 0 0 1 0 0 0 0 0 0 0 0 1" result="g"/><feComposite in="SourceGraphic" in2="g" operator="arithmetic" k1="0.25" k2="0.9" k3="0.06" k4="-0.03"/></filter>
<filter id="gra" x="0" y="0" width="100%" height="100%"><feTurbulence type="fractalNoise" baseFrequency="0.07" numOctaves="2" seed="4" result="n"/><feColorMatrix in="n" type="matrix" values="1 0 0 0 0 1 0 0 0 0 1 0 0 0 0 0 0 0 0 1" result="g"/><feComposite in="SourceGraphic" in2="g" operator="arithmetic" k1="0.25" k2="0.9" k3="0.06" k4="-0.03"/></filter>
<filter id="b12" x="-20%" y="-20%" width="140%" height="140%"><feGaussianBlur stdDeviation="12"/></filter>
<radialGradient id="axg" cx="700" cy="600" r="750" gradientUnits="userSpaceOnUse"><stop offset="0" stop-color="#939393"/><stop offset="0.700" stop-color="#9c9c9c"/><stop offset="1" stop-color="#8e8e8e"/></radialGradient></defs>
<g transform="scale(0.12812)">
<rect x="5" y="18" width="1580" height="1568" fill="#000"/>
<g clip-path="url(#axc)" filter="url(#gra)"><g filter="url(#b6)">
<circle cx="790" cy="800" r="740" fill="#2b2b2b"/>
<path d="M-50 -50H1255L1290 330L1310 450L1300 560L1270 650L1265 780L1250 900L1180 1000L1050 1050L900 1100L760 1125L600 1110L450 1060L300 990L150 910L-50 800z" fill="url(#axg)"/>
<g fill="none" stroke="#5c5c5c" stroke-width="14">
<path d="M110 1050Q300 1200 600 1340T1000 1400T1440 1180" stroke="#727272" stroke-width="16"/>
<path d="M470 1170L520 1140Q800 1150 1000 1190L1180 1230Q1280 1100 1350 800T1380 380"/>
<path d="M180 960Q300 1080 470 1190" stroke="#4c4c4c"/>
<path d="M1100 1260Q1300 1150 1460 1010" stroke="#505050"/>
<path d="M240 1010Q600 1260 1000 1310Q1150 1280 1250 1210" stroke="#444"/>
</g>
<path d="M630 95L650 140M950 105L965 150" stroke="#444" stroke-width="26"/>
</g>
<g filter="url(#b6)" fill="none" stroke-linecap="round" stroke-linejoin="round">
<ellipse cx="745" cy="292" rx="108" ry="96" stroke="#b6b6b6" stroke-width="20"/>
<path d="M690 200Q745 185 810 205" stroke="#c9c9c9" stroke-width="22"/>
<path d="M632 262Q600 330 650 385Q745 425 850 388Q905 335 882 285" stroke="#f8f8f8" stroke-width="27"/>
<path d="M612 372L492 342L522 428L604 412z" stroke="#dedede" stroke-width="20" fill="#c2c2c2"/>
<path d="M888 388L1014 410L996 482L906 452z" stroke="#d2d2d2" stroke-width="20" fill="#bdbdbd"/>
<path d="M622 400Q668 520 712 600L722 690" stroke="#f2f2f2" stroke-width="27"/>
<path d="M884 422Q850 520 772 590L730 682" stroke="#f2f2f2" stroke-width="27"/>
<path d="M722 690L726 640" stroke="#fff" stroke-width="34"/>
<circle cx="565" cy="255" r="8" stroke="#c8c8c8" stroke-width="14"/>
</g></g>
<rect x="5" y="18" width="1580" height="1568" fill="none" stroke="#7e7e14" stroke-width="9" rx="6"/>
</g></svg>
<div style="left:940.6px;top:407.5px;width:1.7px;height:401.5px;background:#35c435;"></div>
<div style="left:725.5px;top:607.6px;width:432.5px;height:1.5px;background:#2a6cb8;"></div>
<div style="left:939.5px;top:606.8px;width:4px;height:0.9px;background:#8a8a20;"></div>
<svg style="left:729px;top:413px;" width="14" height="11" viewBox="0 0 14 11"><path d="M1.300 1.700h10.500M1.300 5.200h10.500M1.300 8.700h10.500" stroke="#bdbdbd" stroke-width="1.250"/></svg>
<svg style="left:728px;top:430.7px;" width="15" height="15" viewBox="0 0 15 15"><g transform="translate(7.500 7.500)"><path d="M0.00 -6.80L1.91 -4.62L4.81 -4.81L4.62 -1.91L6.80 -0.00L4.62 1.91L4.81 4.81L1.91 4.62L0.00 6.80L-1.91 4.62L-4.81 4.81L-4.62 1.91L-6.80 0.00L-4.62 -1.91L-4.81 -4.81L-1.91 -4.62zM2.700 0A2.700 2.700 0 1 0 -2.700 0A2.700 2.700 0 1 0 2.700 0z" fill="#fff" fill-rule="evenodd"/></g></svg>
<svg style="left:726px;top:448.5px;" width="19" height="19" viewBox="0 0 19 19"><g transform="translate(9.500 9.500)"><path d="M0 -5.900V-8.300" transform="rotate(0)" stroke="#eee" stroke-width="1.200"/><path d="M0 -5.900V-8.300" transform="rotate(45)" stroke="#eee" stroke-width="1.200"/><path d="M0 -5.900V-8.300" transform="rotate(90)" stroke="#eee" stroke-width="1.200"/><path d="M0 -5.900V-8.300" transform="rotate(135)" stroke="#eee" stroke-width="1.200"/><path d="M0 -5.900V-8.300" transform="rotate(180)" stroke="#eee" stroke-width="1.200"/><path d="M0 -5.900V-8.300" transform="rotate(225)" stroke="#eee" stroke-width="1.200"/><path d="M0 -5.900V-8.300" transform="rotate(270)" stroke="#eee" stroke-width="1.200"/><path d="M0 -5.900V-8.300" transform="rotate(315)" stroke="#eee" stroke-width="1.200"/><circle r="4" fill="#fff"/><path d="M0.500 -3.100A2.300 3.100 0 0 1 0.500 3.100z" fill="#111"/></g></svg>
<svg style="left:1118.5px;top:410.4px;" width="17" height="15" viewBox="0 0 17 15"><path d="M1.500 4.800H14.500M11.300 1.600L14.500 4.800L11.300 8M15 10.400H2M5.200 7.200L2 10.400L5.200 13.600" fill="none" stroke="#f0f0f0" stroke-width="1.150"/></svg>
<svg style="left:1136.4px;top:407.75px;" width="20" height="20" viewBox="0 0 20 20"><g transform="translate(10 10.500)"><g transform="rotate(0)"><path d="M3.200 -3.200L7.400 -7.400" stroke="#e8e8e8" stroke-width="1.100"/><path d="M8.100 -8.100L5.200 -7.300L7.300 -5.200z" fill="#e8e8e8"/></g><g transform="rotate(90)"><path d="M3.200 -3.200L7.400 -7.400" stroke="#e8e8e8" stroke-width="1.100"/><path d="M8.100 -8.100L5.200 -7.300L7.300 -5.200z" fill="#e8e8e8"/></g><g transform="rotate(180)"><path d="M3.200 -3.200L7.400 -7.400" stroke="#e8e8e8" stroke-width="1.100"/><path d="M8.100 -8.100L5.200 -7.300L7.300 -5.200z" fill="#e8e8e8"/></g><g transform="rotate(270)"><path d="M3.200 -3.200L7.400 -7.400" stroke="#e8e8e8" stroke-width="1.100"/><path d="M8.100 -8.100L5.200 -7.300L7.300 -5.200z" fill="#e8e8e8"/></g><rect x="-2.900" y="-2.900" width="5.800" height="5.800" fill="#d8d8d8"/></g></svg>
<svg style="left:907.3px;top:784.0px;" width="70.30000000000007" height="10" viewBox="0 0 70.30000000000007 10"><g transform="translate(1 0)"><path d="M0 0.500V7.500H68.30000000000007V0.500M13.7 7.500v-3M27.3 7.500v-3M41.0 7.500v-3M54.6 7.500v-3" fill="none" stroke="#a8a818" stroke-width="1.100"/></g></svg>
<span class="dv" style="left:929px;top:793.8px;width:30px;text-align:center;font-size:8.200px;line-height:12px;color:#c4c41c;font-weight:bold;text-shadow:0 0 1.200px #00001c">5 cm</span>
<div style="left:940.6px;top:780px;width:1.7px;height:29px;background:#35c435;"></div>
<div class="dv" style="left:1125.5px;top:778px;width:21.5px;height:21px;background:linear-gradient(135deg,#2424a6,#08086a);color:#d4d4c0;font-weight:bold;font-size:14px;line-height:21.5px;text-align:center">F</div>
<div style="left:1159.8px;top:406px;width:435.4px;height:404.5px;background:#379637"></div>
<div style="left:1161.1499999999999px;top:407.35px;width:432.7px;height:401.8px;background:#1b1b1b"></div>
<div style="left:1161.9499999999998px;top:408.15000000000003px;width:431.09999999999997px;height:400.2px;background:#282828;overflow:hidden"></div>
<svg style="left:1276px;top:407.5px;" width="204" height="401.5" viewBox="0 0 204 401.5"><defs><clipPath id="sgc"><rect x="65" y="75" width="1455" height="2640"/></clipPath>
<linearGradient id="sgg" x1="0" y1="75" x2="0" y2="2715" gradientUnits="userSpaceOnUse"><stop offset="0" stop-color="#8e8e8e"/><stop offset="0.500" stop-color="#979797"/><stop offset="1" stop-color="#a4a4a4"/></linearGradient>
<pattern id="str" width="40" height="44" patternUnits="userSpaceOnUse"><rect width="40" height="22" fill="#161616"/><rect y="22" width="40" height="22" fill="#262626"/></pattern></defs>
<g transform="translate(0 22.5) scale(0.12750)">
<rect x="0" y="-300" width="1600" height="3400" fill="#000"/>
<g clip-path="url(#sgc)" filter="url(#grv)"><g filter="url(#b6)">
<rect x="0" y="0" width="1600" height="2800" fill="url(#sgg)"/>
<path d="M1420 40L1380 150L1330 260L1270 400L1200 520L1150 620L1120 740L1070 820L1055 950L1050 1100L1035 1230L1060 1310L1130 1400L1200 1530L1270 1710L1310 1830L1330 1980L1340 2130L1390 2260L1410 2380L1420 2530L1430 2760H1700V0z" fill="url(#str)"/>
<path d="M1330 1900L1340 2130L1390 2260L1410 2380L1420 2530L1430 2760H1600V1900z" fill="#3a3a3a" opacity=".7"/>
<path d="M1395 250L1425 1830" stroke="#707070" stroke-width="16"/>
<circle cx="1230" cy="1300" r="92" fill="none" stroke="#505050" stroke-width="10"/>
<path d="M1160 1380L1290 1700" stroke="#444" stroke-width="10"/>
<path d="M0 195L200 200L270 300L350 410L240 430L225 540L215 700L240 800L200 900L170 1000L150 1160L0 1185z" fill="#262626"/>
<path d="M0 340L200 330L230 440L60 470z" fill="#7a7a7a"/>
<ellipse cx="75" cy="860" rx="22" ry="40" fill="#999"/>
<path d="M0 1600L100 1530L250 1910L400 2280L480 2480L470 2530L420 2548L330 2460L250 2280L180 2080L0 1930z" fill="#1e1e1e"/>
</g>
<g filter="url(#b6)" fill="none" stroke-linecap="round" stroke-linejoin="round">
<path d="M360 590L340 700L320 800L310 900L300 1000L295 1100L290 1200L295 1300L300 1400L320 1500L350 1650L390 1800L440 1950L500 2100L570 2250L630 2400L680 2550L730 2720" stroke="#adadad" stroke-width="138" stroke-linecap="butt"/>
<path d="M360 590L340 700L320 800L310 900L300 1000L295 1100L290 1200L295 1300L300 1400L320 1500L350 1650L390 1800L440 1950L500 2100L570 2250L630 2400L680 2550L730 2720" stroke="#d4d4d4" stroke-width="120" stroke-dasharray="140 40" stroke-linecap="butt" opacity=".6"/>
<path d="M299 579L279 688L259 791L248 894L238 995L233 1097L228 1200L233 1303L238 1408L259 1512L290 1664L331 1818L382 1971L443 2125L513 2275L572 2421L621 2568L671 2737" stroke="#e2e2e2" stroke-width="16" opacity=".8"/><path d="M421 601L401 712L381 809L372 906L362 1005L357 1103L352 1200L357 1297L362 1392L381 1488L410 1636L449 1782L498 1929L557 2075L627 2225L688 2379L739 2532L789 2703" stroke="#e6e6e6" stroke-width="18" opacity=".85"/>
<path d="M1310 70L1290 160L1230 260L1150 340L1050 410L950 465L850 490L720 510" stroke="#e6e6e6" stroke-width="34"/>
<path d="M1180 240L1110 310" stroke="#c4c4c4" stroke-width="60"/>
<path d="M70 160L200 205L330 290L400 370" stroke="#cfcfcf" stroke-width="44"/>
<ellipse cx="305" cy="500" rx="30" ry="46" stroke="#e0e0e0" stroke-width="22" transform="rotate(15 305 500)"/>
<ellipse cx="610" cy="625" rx="24" ry="52" stroke="#cdcdcd" stroke-width="20" transform="rotate(35 610 625)"/>
<path d="M575 770L545 850L610 870z" stroke="#d0d0d0" stroke-width="20"/>
<path d="M520 920L510 1010L505 1100L505 1210L520 1300L540 1400L570 1500" stroke="#c8c8c8" stroke-width="28" stroke-dasharray="50 48"/>
<path d="M560 1490L620 1600" stroke="#d0d0d0" stroke-width="40"/>
<ellipse cx="700" cy="1730" rx="40" ry="90" stroke="#e0e0e0" stroke-width="24" transform="rotate(-40 700 1730)"/>
<path d="M740 1900L840 1990" stroke="#e0e0e0" stroke-width="44"/>
<path d="M820 2090L870 2200L920 2320L960 2440L1000 2560L1050 2700" stroke="#dedede" stroke-width="40" stroke-dasharray="70 36"/>
</g></g>
</g><rect x="1" y="-3" width="202" height="407" fill="none" stroke="#84841a" stroke-width="1.300"/></svg>
<div style="left:1276px;top:406px;width:203.5px;height:1.6px;background:#9ab81c;"></div>
<div style="left:1276px;top:808.9px;width:203.5px;height:1.6px;background:#9ab81c;"></div>
<div style="left:1376.8px;top:407.5px;width:1.6px;height:401.5px;background:#2a68b4;"></div>
<div style="left:1176px;top:606.9px;width:403px;height:1.5px;background:#d22a34;"></div>
<svg style="left:1164.8px;top:413px;" width="14" height="11" viewBox="0 0 14 11"><path d="M1.300 1.700h10.500M1.300 5.200h10.500M1.300 8.700h10.500" stroke="#bdbdbd" stroke-width="1.250"/></svg>
<svg style="left:1163.8px;top:430.7px;" width="15" height="15" viewBox="0 0 15 15"><g transform="translate(7.500 7.500)"><path d="M0.00 -6.80L1.91 -4.62L4.81 -4.81L4.62 -1.91L6.80 -0.00L4.62 1.91L4.81 4.81L1.91 4.62L0.00 6.80L-1.91 4.62L-4.81 4.81L-4.62 1.91L-6.80 0.00L-4.62 -1.91L-4.81 -4.81L-1.91 -4.62zM2.700 0A2.700 2.700 0 1 0 -2.700 0A2.700 2.700 0 1 0 2.700 0z" fill="#fff" fill-rule="evenodd"/></g></svg>
<svg style="left:1161.8px;top:448.5px;" width="19" height="19" viewBox="0 0 19 19"><g transform="translate(9.500 9.500)"><path d="M0 -5.900V-8.300" transform="rotate(0)" stroke="#eee" stroke-width="1.200"/><path d="M0 -5.900V-8.300" transform="rotate(45)" stroke="#eee" stroke-width="1.200"/><path d="M0 -5.900V-8.300" transform="rotate(90)" stroke="#eee" stroke-width="1.200"/><path d="M0 -5.900V-8.300" transform="rotate(135)" stroke="#eee" stroke-width="1.200"/><path d="M0 -5.900V-8.300" transform="rotate(180)" stroke="#eee" stroke-width="1.200"/><path d="M0 -5.900V-8.300" transform="rotate(225)" stroke="#eee" stroke-width="1.200"/><path d="M0 -5.900V-8.300" transform="rotate(270)" stroke="#eee" stroke-width="1.200"/><path d="M0 -5.900V-8.300" transform="rotate(315)" stroke="#eee" stroke-width="1.200"/><circle r="4" fill="#fff"/><path d="M0.500 -3.100A2.300 3.100 0 0 1 0.500 3.100z" fill="#111"/></g></svg>
<svg style="left:1554.1999999999998px;top:410.4px;" width="17" height="15" viewBox="0 0 17 15"><path d="M1.500 4.800H14.500M11.300 1.600L14.500 4.800L11.300 8M15 10.400H2M5.200 7.200L2 10.400L5.200 13.600" fill="none" stroke="#f0f0f0" stroke-width="1.150"/></svg>
<svg style="left:1572.1px;top:407.75px;" width="20" height="20" viewBox="0 0 20 20"><g transform="translate(10 10.500)"><g transform="rotate(0)"><path d="M3.200 -3.200L7.400 -7.400" stroke="#e8e8e8" stroke-width="1.100"/><path d="M8.100 -8.100L5.200 -7.300L7.300 -5.200z" fill="#e8e8e8"/></g><g transform="rotate(90)"><path d="M3.200 -3.200L7.400 -7.400" stroke="#e8e8e8" stroke-width="1.100"/><path d="M8.100 -8.100L5.200 -7.300L7.300 -5.200z" fill="#e8e8e8"/></g><g transform="rotate(180)"><path d="M3.200 -3.200L7.400 -7.400" stroke="#e8e8e8" stroke-width="1.100"/><path d="M8.100 -8.100L5.200 -7.300L7.300 -5.200z" fill="#e8e8e8"/></g><g transform="rotate(270)"><path d="M3.200 -3.200L7.400 -7.400" stroke="#e8e8e8" stroke-width="1.100"/><path d="M8.100 -8.100L5.200 -7.300L7.300 -5.200z" fill="#e8e8e8"/></g><rect x="-2.900" y="-2.900" width="5.800" height="5.800" fill="#d8d8d8"/></g></svg>
<svg style="left:1343.4px;top:784.0px;" width="70.09999999999991" height="10" viewBox="0 0 70.09999999999991 10"><g transform="translate(1 0)"><path d="M0 0.500V7.500H68.09999999999991V0.500M13.6 7.500v-3M27.2 7.500v-3M40.9 7.500v-3M54.5 7.500v-3" fill="none" stroke="#a8a818" stroke-width="1.100"/></g></svg>
<span class="dv" style="left:1365.5px;top:793.6px;width:30px;text-align:center;font-size:8.200px;line-height:12px;color:#c4c41c;font-weight:bold;text-shadow:0 0 1.200px #00001c">5 cm</span>
<div style="left:1376.8px;top:780px;width:1.6px;height:29px;background:#2a68b4;"></div>
<div class="dv" style="left:1562px;top:779px;width:21px;height:20.5px;background:linear-gradient(135deg,#22a622,#0a680a);color:#d4d4c0;font-weight:bold;font-size:14px;line-height:21.0px;text-align:center">L</div>
<div style="left:288.5px;top:811px;width:653px;height:404.4px;background:#1d5b90"></div>
<div style="left:289.9px;top:812.4px;width:650.2px;height:401.59999999999997px;background:#1b1b1b"></div>
<div style="left:290.7px;top:813.1999999999999px;width:648.6px;height:399.99999999999994px;background:#282828;overflow:hidden"></div>
<svg style="left:514px;top:812.5px;" width="204" height="401.4" viewBox="0 0 204 401.4"><defs><clipPath id="crc"><rect x="65" y="110" width="1455" height="2640"/></clipPath></defs>
<g transform="translate(0 17.5) scale(0.12750)">
<rect x="0" y="-300" width="1600" height="3500" fill="#000"/>
<g clip-path="url(#crc)" filter="url(#grv)"><g filter="url(#b6)">
<rect x="0" y="0" width="1600" height="2900" fill="#959595"/>
<path d="M0 520L65 560L130 640L210 740L270 860L310 980L330 1080L310 1180L280 1260L200 1330L0 1400z" fill="url(#str)"/>
<path d="M1420 60L1400 260L1340 420L1290 560L1230 700L1170 850L1130 1000L1125 1100L1135 1200L1170 1290L1250 1380L1350 1440L1450 1470L1600 1475V60z" fill="url(#str)"/>
<path d="M1390 500L1385 1320" stroke="#7c7c7c" stroke-width="20"/>
<path d="M1390 1320Q1440 1230 1510 1190" stroke="#484848" stroke-width="10" fill="none"/>
<path d="M90 1330Q130 1210 240 1210" stroke="#404040" stroke-width="10" fill="none"/>
<path d="M0 2292 65 2242 110 2172 200 2122 300 2142 400 2212 460 2312 490 2412 510 2562 545 2812 0 2812z" fill="#323232"/>
<path d="M1060 2052 1100 2002 1200 1982 1350 2012 1450 2092 1600 2102 1600 2812 1150 2812 1140 2612 1080 2492 1000 2462 960 2412 1000 2262z" fill="#303030"/>
<path d="M600 2312 700 2212 800 2212 900 2312 940 2412 880 2512 870 2812 545 2812 500 2512 510 2362z" fill="#c2c2c2"/>
</g>
<g filter="url(#b6)" fill="none" stroke-linecap="round" stroke-linejoin="round">
<path d="M75 110L95 250L140 380L220 470L330 530L500 565L650 495L800 525L900 540L1050 500L1150 440L1250 340L1310 220L1335 110" stroke="#e4e4e4" stroke-width="30"/>
<path d="M80 120L110 300M1325 120L1280 300L1210 400" stroke="#f0f0f0" stroke-width="54"/>
<path d="M1180 1882 1300 1872 1420 1932" stroke="#b4b4b4" stroke-width="50"/>
<ellipse cx="1020" cy="1882" rx="36" ry="40" stroke="#b8b8b8" stroke-width="18"/>
<ellipse cx="712" cy="1597" rx="16" ry="30" stroke="#d8d8d8" stroke-width="22"/>
<ellipse cx="725" cy="1777" rx="34" ry="48" stroke="#ececec" stroke-width="18"/>
<path d="M630 2062 690 1962 740 1932 800 1972 850 2062" stroke="#dcdcdc" stroke-width="22"/>
<path d="M690 2052 740 2012 790 2052" stroke="#e8e8e8" stroke-width="18"/>
<ellipse cx="380" cy="2142" rx="78" ry="46" stroke="#e2e2e2" stroke-width="20" transform="rotate(32 380 2142)"/>
<ellipse cx="1000" cy="2134" rx="52" ry="30" stroke="#e2e2e2" stroke-width="20" transform="rotate(-10 1000 2134)"/>
<path d="M600 2132 680 2102 620 2212z" stroke="#e0e0e0" stroke-width="18"/>
<path d="M820 2132 900 2142 850 2212z" stroke="#e0e0e0" stroke-width="18"/>
<path d="M500 2332 520 2412 600 2342 560 2562 520 2552" stroke="#ececec" stroke-width="22"/>
<path d="M830 2352 870 2432 940 2372" stroke="#e0e0e0" stroke-width="20"/>
<path d="M600 2542 860 2542" stroke="#d8d8d8" stroke-width="16"/>
</g></g>
</g><rect x="1" y="-3" width="201.600" height="407" fill="none" stroke="#84841a" stroke-width="1.300"/></svg>
<div style="left:514px;top:1213.8px;width:203.5px;height:1.6px;background:#9ab81c;"></div>
<div style="left:613.9px;top:812.5px;width:1.7px;height:401.5px;background:#35c435;"></div>
<div style="left:398.4px;top:1011.3px;width:433px;height:1.5px;background:#d22a34;"></div>
<svg style="left:293.5px;top:818px;" width="14" height="11" viewBox="0 0 14 11"><path d="M1.300 1.700h10.500M1.300 5.200h10.500M1.300 8.700h10.500" stroke="#bdbdbd" stroke-width="1.250"/></svg>
<svg style="left:292.5px;top:835.7px;" width="15" height="15" viewBox="0 0 15 15"><g transform="translate(7.500 7.500)"><path d="M0.00 -6.80L1.91 -4.62L4.81 -4.81L4.62 -1.91L6.80 -0.00L4.62 1.91L4.81 4.81L1.91 4.62L0.00 6.80L-1.91 4.62L-4.81 4.81L-4.62 1.91L-6.80 0.00L-4.62 -1.91L-4.81 -4.81L-1.91 -4.62zM2.700 0A2.700 2.700 0 1 0 -2.700 0A2.700 2.700 0 1 0 2.700 0z" fill="#fff" fill-rule="evenodd"/></g></svg>
<svg style="left:290.5px;top:853.5px;" width="19" height="19" viewBox="0 0 19 19"><g transform="translate(9.500 9.500)"><path d="M0 -5.900V-8.300" transform="rotate(0)" stroke="#eee" stroke-width="1.200"/><path d="M0 -5.900V-8.300" transform="rotate(45)" stroke="#eee" stroke-width="1.200"/><path d="M0 -5.900V-8.300" transform="rotate(90)" stroke="#eee" stroke-width="1.200"/><path d="M0 -5.900V-8.300" transform="rotate(135)" stroke="#eee" stroke-width="1.200"/><path d="M0 -5.900V-8.300" transform="rotate(180)" stroke="#eee" stroke-width="1.200"/><path d="M0 -5.900V-8.300" transform="rotate(225)" stroke="#eee" stroke-width="1.200"/><path d="M0 -5.900V-8.300" transform="rotate(270)" stroke="#eee" stroke-width="1.200"/><path d="M0 -5.900V-8.300" transform="rotate(315)" stroke="#eee" stroke-width="1.200"/><circle r="4" fill="#fff"/><path d="M0.500 -3.100A2.300 3.100 0 0 1 0.500 3.100z" fill="#111"/></g></svg>
<svg style="left:900.5px;top:815.4px;" width="17" height="15" viewBox="0 0 17 15"><path d="M1.500 4.800H14.500M11.300 1.600L14.500 4.800L11.300 8M15 10.400H2M5.200 7.200L2 10.400L5.200 13.600" fill="none" stroke="#f0f0f0" stroke-width="1.150"/></svg>
<svg style="left:918.4px;top:812.75px;" width="20" height="20" viewBox="0 0 20 20"><g transform="translate(10 10.500)"><g transform="rotate(0)"><path d="M3.200 -3.200L7.400 -7.400" stroke="#e8e8e8" stroke-width="1.100"/><path d="M8.100 -8.100L5.200 -7.300L7.300 -5.200z" fill="#e8e8e8"/></g><g transform="rotate(90)"><path d="M3.200 -3.200L7.400 -7.400" stroke="#e8e8e8" stroke-width="1.100"/><path d="M8.100 -8.100L5.200 -7.300L7.300 -5.200z" fill="#e8e8e8"/></g><g transform="rotate(180)"><path d="M3.200 -3.200L7.400 -7.400" stroke="#e8e8e8" stroke-width="1.100"/><path d="M8.100 -8.100L5.200 -7.300L7.300 -5.200z" fill="#e8e8e8"/></g><g transform="rotate(270)"><path d="M3.200 -3.200L7.400 -7.400" stroke="#e8e8e8" stroke-width="1.100"/><path d="M8.100 -8.100L5.200 -7.300L7.300 -5.200z" fill="#e8e8e8"/></g><rect x="-2.900" y="-2.900" width="5.800" height="5.800" fill="#d8d8d8"/></g></svg>
<svg style="left:581px;top:1188.5px;" width="70.70000000000005" height="10" viewBox="0 0 70.70000000000005 10"><g transform="translate(1 0)"><path d="M0 0.500V7.500H68.70000000000005V0.500M13.7 7.500v-3M27.5 7.500v-3M41.2 7.500v-3M55.0 7.500v-3" fill="none" stroke="#a8a818" stroke-width="1.100"/></g></svg>
<span class="dv" style="left:602.5px;top:1198.5px;width:30px;text-align:center;font-size:8.200px;line-height:12px;color:#c4c41c;font-weight:bold;text-shadow:0 0 1.200px #00001c">5 cm</span>
<div style="left:613.9px;top:1185px;width:1.7px;height:29px;background:#35c435;"></div>
<div class="dv" style="left:908.5px;top:1183.7px;width:20.5px;height:20.2px;background:linear-gradient(135deg,#d8672a,#9a3410);color:#d4d4c0;font-weight:bold;font-size:14px;line-height:20.7px;text-align:center">A</div>
<div style="left:942px;top:811px;width:653.2px;height:404.4px;background:#cdcdcd"></div>
<div style="left:943.25px;top:812.25px;width:650.7px;height:401.9px;background:#0a0a0a"></div>
<div style="left:944.05px;top:813.05px;width:649.1px;height:400.29999999999995px;background:#282828;overflow:hidden"></div>
<svg style="left:947px;top:818px;" width="14" height="11" viewBox="0 0 14 11"><path d="M1.300 1.700h10.500M1.300 5.200h10.500M1.300 8.700h10.500" stroke="#bdbdbd" stroke-width="1.250"/></svg>
<svg style="left:946px;top:835.7px;" width="15" height="15" viewBox="0 0 15 15"><g transform="translate(7.500 7.500)"><path d="M0.00 -6.80L1.91 -4.62L4.81 -4.81L4.62 -1.91L6.80 -0.00L4.62 1.91L4.81 4.81L1.91 4.62L0.00 6.80L-1.91 4.62L-4.81 4.81L-4.62 1.91L-6.80 0.00L-4.62 -1.91L-4.81 -4.81L-1.91 -4.62zM2.700 0A2.700 2.700 0 1 0 -2.700 0A2.700 2.700 0 1 0 2.700 0z" fill="#fff" fill-rule="evenodd"/></g></svg>
<svg style="left:944px;top:853.5px;" width="19" height="19" viewBox="0 0 19 19"><g transform="translate(9.500 9.500)"><path d="M0 -5.900V-8.300" transform="rotate(0)" stroke="#eee" stroke-width="1.200"/><path d="M0 -5.900V-8.300" transform="rotate(45)" stroke="#eee" stroke-width="1.200"/><path d="M0 -5.900V-8.300" transform="rotate(90)" stroke="#eee" stroke-width="1.200"/><path d="M0 -5.900V-8.300" transform="rotate(135)" stroke="#eee" stroke-width="1.200"/><path d="M0 -5.900V-8.300" transform="rotate(180)" stroke="#eee" stroke-width="1.200"/><path d="M0 -5.900V-8.300" transform="rotate(225)" stroke="#eee" stroke-width="1.200"/><path d="M0 -5.900V-8.300" transform="rotate(270)" stroke="#eee" stroke-width="1.200"/><path d="M0 -5.900V-8.300" transform="rotate(315)" stroke="#eee" stroke-width="1.200"/><circle r="4" fill="#fff"/><path d="M0.500 -3.100A2.300 3.100 0 0 1 0.500 3.100z" fill="#111"/></g></svg>
<svg style="left:1554.2px;top:815.4px;" width="17" height="15" viewBox="0 0 17 15"><path d="M1.500 4.800H14.500M11.300 1.600L14.500 4.800L11.300 8M15 10.400H2M5.200 7.200L2 10.400L5.200 13.600" fill="none" stroke="#f0f0f0" stroke-width="1.150"/></svg>
<svg style="left:1572.1000000000001px;top:812.75px;" width="20" height="20" viewBox="0 0 20 20"><g transform="translate(10 10.500)"><g transform="rotate(0)"><path d="M3.200 -3.200L7.400 -7.400" stroke="#e8e8e8" stroke-width="1.100"/><path d="M8.100 -8.100L5.200 -7.300L7.300 -5.200z" fill="#e8e8e8"/></g><g transform="rotate(90)"><path d="M3.200 -3.200L7.400 -7.400" stroke="#e8e8e8" stroke-width="1.100"/><path d="M8.100 -8.100L5.200 -7.300L7.300 -5.200z" fill="#e8e8e8"/></g><g transform="rotate(180)"><path d="M3.200 -3.200L7.400 -7.400" stroke="#e8e8e8" stroke-width="1.100"/><path d="M8.100 -8.100L5.200 -7.300L7.300 -5.200z" fill="#e8e8e8"/></g><g transform="rotate(270)"><path d="M3.200 -3.200L7.400 -7.400" stroke="#e8e8e8" stroke-width="1.100"/><path d="M8.100 -8.100L5.200 -7.300L7.300 -5.200z" fill="#e8e8e8"/></g><rect x="-2.900" y="-2.900" width="5.800" height="5.800" fill="#d8d8d8"/></g></svg>
<svg style="left:943.5px;top:812.5px;" width="650.2" height="401.4" viewBox="0 0 650.2 401.4"><defs><linearGradient id="dg" gradientUnits="userSpaceOnUse" x1="411.9000000000001" y1="89.70000000000005" x2="508.20000000000005" y2="142.5"><stop offset="0" stop-color="#000"/><stop offset="0.225" stop-color="#030303"/><stop offset="0.245" stop-color="#8c8c8c"/><stop offset="0.300" stop-color="#bcbcbc"/><stop offset="0.420" stop-color="#e8e8e8"/><stop offset="0.550" stop-color="#ececec"/><stop offset="0.600" stop-color="#cfcfcf"/><stop offset="0.720" stop-color="#ababab"/><stop offset="0.760" stop-color="#6c6c6c"/><stop offset="0.790" stop-color="#080808"/><stop offset="1" stop-color="#000"/></linearGradient><linearGradient id="fl" gradientUnits="userSpaceOnUse" x1="149.5999999999999" y1="0" x2="508.20000000000005" y2="0"><stop offset="0" stop-color="#b4b43a"/><stop offset="0.550" stop-color="#cfcf8a"/><stop offset="1" stop-color="#e8e8e0"/></linearGradient><linearGradient id="vg" x1="0" x2="1" y1="0" y2="0"><stop offset="0" stop-color="#c8c8c8"/><stop offset="0.250" stop-color="#f0f0f0"/><stop offset="0.600" stop-color="#e0e0e0"/><stop offset="1" stop-color="#bdbdbd"/></linearGradient><filter id="b1"><feGaussianBlur stdDeviation="0.700"/></filter></defs><path d="M328.2 253.5h0M344.6 253.5h0M361.0 253.0h0M377.2 252.0h0M393.1 250.4h0M408.7 248.3h0M423.8 245.7h0M438.3 242.6h0M452.2 239.1h0M465.4 235.2h0M477.8 230.9h0M489.3 226.2h0M500.0 221.3h0M509.8 216.1h0M518.6 210.7h0M526.5 205.1h0M533.5 199.4h0M539.5 193.6h0M544.6 187.7h0M548.8 181.8h0M552.1 175.9h0M554.6 170.0h0M556.3 164.1h0M557.2 158.3h0M557.4 152.7h0M556.8 147.1h0M555.6 141.6h0M553.8 136.3h0M551.4 131.1h0M548.4 126.1h0M544.9 121.2h0M541.0 116.5h0M536.6 112.0h0M531.8 107.6h0M526.6 103.4h0M521.1 99.4h0M515.2 95.6h0M509.1 92.0h0M502.7 88.5h0M496.0 85.2h0M489.1 82.1h0M482.0 79.2h0M474.7 76.5h0M467.3 73.9h0M459.7 71.5h0M451.9 69.3h0M444.1 67.2h0M436.1 65.3h0M428.0 63.6h0M419.8 62.0h0M411.6 60.6h0M403.3 59.3h0M394.9 58.2h0M386.5 57.3h0M378.0 56.5h0M369.5 55.9h0M361.0 55.4h0M352.4 55.1h0M343.9 54.9h0M335.3 54.9h0M326.8 55.0h0M318.2 55.3h0M309.7 55.7h0M301.2 56.3h0M292.7 57.1h0M284.2 58.0h0M275.9 59.0h0M267.5 60.2h0M259.3 61.6h0M251.1 63.1h0M243.0 64.8h0M235.0 66.7h0M227.1 68.7h0M219.3 70.9h0M211.6 73.3h0M204.1 75.8h0M196.8 78.5h0M189.7 81.4h0M182.7 84.4h0M176.0 87.7h0M169.5 91.1h0M163.3 94.7h0M157.4 98.4h0M151.8 102.4h0M146.5 106.5h0M141.6 110.8h0M137.1 115.3h0M133.0 120.0h0M129.4 124.8h0M126.3 129.8h0M123.8 134.9h0M121.8 140.2h0M120.4 145.7h0M119.7 151.2h0M119.7 156.9h0M120.4 162.6h0M121.9 168.5h0M124.2 174.4h0M127.3 180.3h0M131.3 186.2h0M136.1 192.1h0M141.9 197.9h0M148.6 203.7h0M156.3 209.3h0M164.9 214.7h0M174.4 220.0h0M184.9 225.0h0M196.2 229.7h0M208.4 234.1h0M221.3 238.1h0M235.0 241.8h0M249.4 245.0h0M264.4 247.7h0M279.8 249.9h0M295.7 251.6h0M311.9 252.8h0M324.9 262.0h0M341.1 262.2h0M357.3 261.8h0M373.5 260.9h0M389.3 259.4h0M404.8 257.4h0M419.9 254.8h0M434.5 251.8h0M448.4 248.3h0M461.6 244.4h0M474.0 240.2h0M485.7 235.5h0M496.5 230.6h0M506.4 225.4h0M515.3 220.0h0M523.4 214.3h0M530.5 208.6h0M536.7 202.7h0M542.0 196.7h0M546.4 190.7h0M549.9 184.7h0M552.6 178.7h0M554.4 172.8h0M555.5 166.9h0M555.9 161.1h0M555.5 155.4h0M554.5 149.8h0M552.8 144.4h0M550.6 139.1h0M547.7 133.9h0M544.4 128.9h0M540.6 124.1h0M536.4 119.5h0M531.7 115.0h0M526.6 110.7h0M521.2 106.6h0M515.5 102.7h0M509.5 98.9h0M503.1 95.4h0M496.6 92.0h0M489.8 88.8h0M482.8 85.8h0M475.6 82.9h0M468.2 80.3h0M460.7 77.8h0M453.0 75.5h0M445.2 73.3h0M437.3 71.4h0M429.3 69.6h0M421.2 67.9h0M413.0 66.5h0M404.7 65.1h0M396.4 64.0h0M388.0 63.0h0M379.6 62.2h0M371.2 61.5h0M362.7 61.0h0M354.2 60.6h0M345.7 60.4h0M337.1 60.3h0M328.6 60.4h0M320.1 60.7h0M311.6 61.1h0M303.1 61.7h0M294.7 62.4h0M286.3 63.3h0M277.9 64.3h0M269.6 65.5h0M261.4 66.9h0M253.2 68.4h0M245.1 70.1h0M237.2 72.0h0M229.3 74.0h0M221.5 76.2h0M213.9 78.6h0M206.4 81.1h0M199.1 83.8h0M192.0 86.7h0M185.0 89.8h0M178.3 93.1h0M171.8 96.5h0M165.6 100.1h0M159.6 103.9h0M154.0 107.9h0M148.7 112.1h0M143.8 116.4h0M139.2 120.9h0M135.1 125.7h0M131.5 130.5h0M128.3 135.6h0M125.7 140.8h0M123.6 146.1h0M122.1 151.6h0M121.3 157.2h0M121.2 163.0h0M121.7 168.8h0M123.1 174.7h0M125.2 180.7h0M128.1 186.7h0M131.9 192.7h0M136.6 198.7h0M142.2 204.6h0M148.7 210.4h0M156.1 216.2h0M164.4 221.7h0M173.7 227.1h0M183.9 232.2h0M195.0 237.0h0M206.9 241.6h0M219.6 245.7h0M233.0 249.5h0M247.1 252.8h0M261.9 255.7h0M277.1 258.1h0M292.7 259.9h0M308.7 261.2h0M321.6 270.3h0M337.7 270.6h0M353.8 270.4h0M369.8 269.6h0M385.6 268.2h0M401.0 266.3h0M416.1 263.8h0M430.6 260.9h0M444.5 257.4h0M457.8 253.6h0M470.3 249.3h0M482.1 244.7h0M492.9 239.8h0M503.0 234.6h0M512.1 229.1h0M520.3 223.5h0M527.6 217.6h0M533.9 211.7h0M539.4 205.7h0M544.0 199.6h0M547.7 193.5h0M550.5 187.4h0M552.6 181.4h0M553.8 175.4h0M554.4 169.5h0M554.2 163.7h0M553.3 158.0h0M551.8 152.4h0M549.7 147.0h0M547.1 141.8h0M543.9 136.7h0M540.2 131.7h0M536.1 127.0h0M531.6 122.4h0M526.6 118.0h0M521.3 113.7h0M515.7 109.7h0M509.8 105.9h0M503.6 102.2h0M497.1 98.7h0M490.4 95.4h0M483.5 92.3h0M476.4 89.4h0M469.1 86.6h0M461.7 84.1h0M454.1 81.7h0M446.3 79.5h0M438.5 77.4h0M430.5 75.5h0M422.5 73.8h0M414.4 72.3h0M406.1 70.9h0M397.9 69.7h0M389.6 68.7h0M381.2 67.8h0M372.8 67.1h0M364.3 66.5h0M355.9 66.1h0M347.4 65.8h0M338.9 65.8h0M330.5 65.8h0M322.0 66.1h0M313.5 66.4h0M305.1 67.0h0M296.7 67.7h0M288.3 68.6h0M280.0 69.6h0M271.7 70.8h0M263.5 72.1h0M255.4 73.7h0M247.3 75.3h0M239.3 77.2h0M231.5 79.2h0M223.7 81.4h0M216.1 83.8h0M208.7 86.4h0M201.4 89.1h0M194.2 92.0h0M187.3 95.1h0M180.6 98.4h0M174.1 101.8h0M167.8 105.5h0M161.9 109.3h0M156.2 113.3h0M150.9 117.5h0M145.9 121.9h0M141.4 126.5h0M137.2 131.2h0M133.5 136.1h0M130.2 141.2h0M127.5 146.5h0M125.4 151.9h0M123.8 157.4h0M122.9 163.1h0M122.6 168.9h0M123.1 174.8h0M124.3 180.8h0M126.2 186.8h0M129.0 192.9h0M132.6 199.0h0M137.1 205.1h0M142.5 211.1h0M148.7 217.0h0M155.9 222.9h0M164.0 228.5h0M173.1 234.0h0M183.0 239.2h0M193.8 244.2h0M205.4 248.9h0M217.9 253.2h0M231.1 257.1h0M244.9 260.5h0M259.4 263.5h0M274.4 266.0h0M289.8 268.0h0M305.6 269.4h0M318.3 278.5h0M334.3 278.9h0M350.3 278.8h0M366.1 278.1h0M381.8 276.8h0M397.2 275.0h0M412.3 272.6h0M426.8 269.7h0M440.7 266.4h0M454.0 262.6h0M466.6 258.4h0M478.4 253.8h0M489.4 248.8h0M499.6 243.6h0M508.8 238.1h0M517.2 232.5h0M524.6 226.6h0M531.2 220.6h0M536.8 214.6h0M541.5 208.4h0M545.4 202.2h0M548.5 196.1h0M550.7 189.9h0M552.1 183.9h0M552.8 177.8h0M552.8 171.9h0M552.1 166.1h0M550.8 160.5h0M548.8 154.9h0M546.3 149.5h0M543.3 144.3h0M539.8 139.3h0M535.8 134.4h0M531.4 129.7h0M526.6 125.2h0M521.4 120.8h0M515.9 116.7h0M510.1 112.7h0M504.0 109.0h0M497.6 105.4h0M491.0 102.0h0M484.2 98.8h0M477.2 95.8h0M470.0 93.0h0M462.6 90.3h0M455.1 87.8h0M447.4 85.5h0M439.6 83.4h0M431.8 81.5h0M423.8 79.7h0M415.7 78.1h0M407.6 76.7h0M399.3 75.4h0M391.1 74.3h0M382.8 73.4h0M374.4 72.6h0M366.0 72.0h0M357.6 71.5h0M349.2 71.2h0M340.7 71.1h0M332.3 71.2h0M323.8 71.4h0M315.4 71.7h0M307.0 72.2h0M298.6 72.9h0M290.3 73.8h0M282.0 74.8h0M273.8 76.0h0M265.6 77.3h0M257.5 78.8h0M249.4 80.5h0M241.5 82.4h0M233.7 84.4h0M225.9 86.6h0M218.3 89.0h0M210.9 91.5h0M203.6 94.3h0M196.5 97.2h0M189.5 100.3h0M182.8 103.6h0M176.3 107.1h0M170.1 110.7h0M164.1 114.6h0M158.4 118.6h0M153.1 122.9h0M148.1 127.3h0M143.5 131.9h0M139.3 136.7h0M135.5 141.6h0M132.2 146.8h0M129.4 152.1h0M127.2 157.5h0M125.5 163.1h0M124.5 168.9h0M124.1 174.7h0M124.4 180.7h0M125.5 186.7h0M127.3 192.8h0M129.9 199.0h0M133.3 205.2h0M137.6 211.3h0M142.8 217.4h0M148.8 223.5h0M155.8 229.4h0M163.7 235.2h0M172.4 240.8h0M182.1 246.1h0M192.7 251.2h0M204.0 256.0h0M216.2 260.4h0M229.2 264.4h0M242.8 268.0h0M257.0 271.2h0M271.8 273.8h0M287.0 275.9h0M302.5 277.5h0M315.2 286.5h0M331.0 287.1h0M346.8 287.0h0M362.6 286.4h0M378.2 285.3h0M393.5 283.5h0M408.5 281.3h0M423.0 278.5h0M437.0 275.2h0M450.3 271.4h0M463.0 267.2h0M474.9 262.7h0M485.9 257.8h0M496.2 252.6h0M505.6 247.1h0M514.1 241.4h0M521.7 235.5h0M528.4 229.5h0M534.2 223.3h0M539.1 217.1h0M543.1 210.9h0M546.4 204.6h0M548.8 198.4h0M550.4 192.2h0M551.3 186.1h0M551.4 180.1h0M550.9 174.2h0M549.7 168.4h0M547.9 162.8h0M545.6 157.3h0M542.7 151.9h0M539.3 146.8h0M535.5 141.8h0M531.2 137.0h0M526.6 132.4h0M521.5 127.9h0M516.1 123.7h0M510.4 119.6h0M504.4 115.7h0M498.1 112.1h0M491.6 108.6h0M484.9 105.3h0M478.0 102.2h0M470.8 99.2h0M463.5 96.5h0M456.1 94.0h0M448.5 91.6h0M440.8 89.4h0M433.0 87.4h0M425.0 85.5h0M417.0 83.9h0M408.9 82.4h0M400.8 81.0h0M392.6 79.9h0M384.3 78.9h0M376.0 78.1h0M367.7 77.4h0M359.3 76.9h0M350.9 76.6h0M342.5 76.4h0M334.1 76.5h0M325.7 76.6h0M317.3 77.0h0M308.9 77.4h0M300.6 78.1h0M292.3 78.9h0M284.0 79.9h0M275.8 81.1h0M267.7 82.4h0M259.6 83.9h0M251.6 85.6h0M243.6 87.5h0M235.8 89.5h0M228.1 91.7h0M220.5 94.1h0M213.1 96.6h0M205.8 99.4h0M198.7 102.3h0M191.8 105.4h0M185.0 108.7h0M178.5 112.2h0M172.3 115.9h0M166.3 119.8h0M160.6 123.9h0M155.2 128.1h0M150.2 132.6h0M145.6 137.2h0M141.3 142.0h0M137.5 147.0h0M134.1 152.2h0M131.3 157.5h0M129.0 163.0h0M127.2 168.7h0M126.1 174.5h0M125.6 180.4h0M125.8 186.4h0M126.7 192.5h0M128.3 198.7h0M130.8 204.9h0M134.0 211.2h0M138.1 217.4h0M143.1 223.6h0M148.9 229.8h0M155.7 235.8h0M163.3 241.7h0M171.9 247.4h0M181.3 252.8h0M191.6 258.0h0M202.7 262.9h0M214.6 267.5h0M227.3 271.6h0M240.7 275.3h0M254.7 278.6h0M269.2 281.4h0M284.2 283.6h0M299.6 285.3h0M312.1 294.3h0M327.7 295.0h0M343.4 295.1h0M359.1 294.6h0M374.6 293.6h0M389.8 291.9h0M404.8 289.8h0M419.3 287.0h0M433.2 283.8h0M446.6 280.1h0M459.3 276.0h0M471.3 271.5h0M482.5 266.6h0M492.8 261.4h0M502.3 255.9h0M511.0 250.2h0M518.7 244.3h0M525.6 238.2h0M531.5 232.0h0M536.6 225.8h0M540.9 219.5h0M544.2 213.1h0M546.8 206.8h0M548.6 200.6h0M549.7 194.3h0M550.0 188.2h0M549.6 182.2h0M548.6 176.3h0M547.0 170.6h0M544.8 165.0h0M542.1 159.5h0M538.9 154.3h0M535.2 149.2h0M531.0 144.2h0M526.5 139.5h0M521.6 135.0h0M516.3 130.6h0M510.7 126.4h0M504.8 122.5h0M498.6 118.7h0M492.2 115.1h0M485.6 111.7h0M478.7 108.5h0M471.7 105.5h0M464.5 102.7h0M457.1 100.0h0M449.6 97.6h0M441.9 95.3h0M434.2 93.2h0M426.3 91.3h0M418.4 89.6h0M410.3 88.0h0M402.2 86.6h0M394.1 85.4h0M385.8 84.4h0M377.6 83.5h0M369.3 82.8h0M361.0 82.3h0M352.6 81.9h0M344.3 81.7h0M335.9 81.7h0M327.5 81.8h0M319.2 82.1h0M310.8 82.6h0M302.5 83.2h0M294.3 84.1h0M286.0 85.0h0M277.8 86.2h0M269.7 87.5h0M261.7 89.0h0M253.7 90.7h0M245.8 92.5h0M238.0 94.5h0M230.3 96.7h0M222.7 99.1h0M215.3 101.7h0M208.0 104.4h0M200.9 107.4h0M194.0 110.5h0M187.3 113.8h0M180.8 117.3h0M174.5 121.0h0M168.5 124.9h0M162.8 129.0h0M157.4 133.3h0M152.3 137.8h0M147.6 142.4h0M143.3 147.3h0M139.5 152.3h0M136.0 157.5h0M133.1 162.9h0M130.7 168.5h0M128.9 174.2h0M127.7 180.0h0M127.1 186.0h0M127.1 192.0h0M127.9 198.2h0M129.4 204.5h0M131.7 210.8h0M134.8 217.1h0M138.7 223.4h0M143.5 229.7h0M149.1 235.9h0M155.6 242.0h0M163.0 248.0h0M171.3 253.8h0M180.5 259.4h0M190.5 264.7h0M201.4 269.7h0M213.1 274.4h0M225.5 278.6h0M238.7 282.5h0M252.4 285.9h0M266.7 288.8h0M281.5 291.2h0M296.7 293.0h0M309.1 302.0h0M324.5 302.8h0M340.1 303.0h0M355.6 302.7h0M371.0 301.7h0M386.2 300.2h0M401.1 298.1h0M415.6 295.5h0M429.5 292.3h0M442.9 288.7h0M455.7 284.6h0M467.7 280.2h0M479.0 275.3h0M489.5 270.1h0M499.1 264.6h0M507.9 258.9h0M515.8 253.0h0M522.8 246.9h0M528.9 240.6h0M534.2 234.3h0M538.6 227.9h0M542.1 221.5h0M544.9 215.2h0M546.9 208.8h0M548.1 202.5h0M548.6 196.3h0M548.4 190.2h0M547.5 184.2h0M546.1 178.3h0M544.0 172.6h0M541.5 167.1h0M538.4 161.7h0M534.8 156.5h0M530.8 151.5h0M526.4 146.6h0M521.6 142.0h0M516.4 137.5h0M510.9 133.2h0M505.1 129.2h0M499.1 125.3h0M492.8 121.6h0M486.2 118.1h0M479.4 114.8h0M472.5 111.7h0M465.4 108.8h0M458.1 106.1h0M450.6 103.6h0M443.0 101.2h0M435.3 99.1h0M427.5 97.1h0M419.7 95.3h0M411.7 93.7h0M403.6 92.2h0M395.5 91.0h0M387.3 89.9h0M379.1 88.9h0M370.9 88.2h0M362.6 87.6h0M354.3 87.2h0M346.0 87.0h0M337.7 86.9h0M329.3 87.0h0M321.0 87.3h0M312.7 87.7h0M304.5 88.3h0M296.2 89.1h0M288.0 90.1h0M279.9 91.2h0M271.8 92.5h0M263.7 94.0h0M255.8 95.6h0M247.9 97.5h0M240.1 99.5h0M232.4 101.7h0M224.9 104.1h0M217.5 106.6h0M210.2 109.4h0M203.1 112.3h0M196.2 115.5h0M189.5 118.8h0M182.9 122.3h0M176.7 126.1h0M170.7 130.0h0M164.9 134.1h0M159.5 138.4h0M154.4 142.9h0M149.7 147.6h0M145.4 152.5h0M141.4 157.5h0M138.0 162.8h0M135.0 168.2h0M132.5 173.8h0M130.6 179.5h0M129.2 185.4h0M128.5 191.4h0M128.5 197.5h0M129.1 203.8h0M130.5 210.1h0M132.6 216.4h0M135.5 222.8h0M139.3 229.2h0M143.8 235.6h0M149.3 241.9h0M155.6 248.1h0M162.8 254.2h0M170.8 260.1h0M179.8 265.7h0M189.6 271.2h0M200.2 276.3h0M211.6 281.1h0M223.8 285.5h0M236.7 289.5h0M250.2 293.0h0M264.3 296.1h0M278.9 298.6h0M293.8 300.5h0M306.1 309.4h0M321.4 310.4h0M336.8 310.8h0M352.2 310.5h0M367.5 309.7h0M382.6 308.3h0M397.5 306.3h0M411.9 303.8h0M425.9 300.7h0M439.3 297.2h0M452.1 293.1h0M464.2 288.7h0M475.5 283.9h0M486.1 278.7h0M495.9 273.2h0M504.8 267.5h0M512.8 261.5h0M520.0 255.4h0M526.2 249.2h0M531.7 242.8h0M536.2 236.4h0M540.0 229.9h0M542.9 223.4h0M545.1 217.0h0M546.4 210.6h0M547.1 204.3h0M547.1 198.1h0M546.4 192.0h0M545.1 186.1h0M543.2 180.2h0M540.8 174.6h0M537.9 169.1h0M534.4 163.8h0M530.6 158.6h0M526.3 153.7h0M521.6 148.9h0M516.5 144.4h0M511.2 140.0h0M505.5 135.8h0M499.5 131.9h0M493.3 128.1h0M486.8 124.5h0M480.2 121.1h0M473.3 117.9h0M466.2 114.9h0M459.0 112.1h0M451.6 109.5h0M444.1 107.1h0M436.5 104.9h0M428.8 102.8h0M420.9 101.0h0M413.0 99.3h0M405.0 97.8h0M397.0 96.4h0M388.8 95.3h0M380.7 94.3h0M372.5 93.5h0M364.2 92.9h0M356.0 92.5h0M347.7 92.2h0M339.4 92.1h0M331.1 92.1h0M322.9 92.4h0M314.6 92.8h0M306.4 93.4h0M298.1 94.1h0M290.0 95.1h0M281.8 96.2h0M273.8 97.5h0M265.8 98.9h0M257.8 100.6h0M250.0 102.4h0M242.2 104.4h0M234.6 106.6h0M227.0 109.0h0M219.6 111.5h0M212.4 114.3h0M205.3 117.2h0M198.4 120.4h0M191.6 123.7h0M185.1 127.3h0M178.8 131.0h0M172.8 134.9h0M167.1 139.1h0M161.6 143.4h0M156.5 147.9h0M151.8 152.6h0M147.4 157.5h0M143.4 162.6h0M139.9 167.9h0M136.8 173.3h0M134.3 179.0h0M132.3 184.7h0M130.8 190.7h0M130.0 196.7h0M129.8 202.9h0M130.3 209.2h0M131.6 215.6h0M133.5 222.0h0M136.3 228.5h0M139.9 234.9h0M144.2 241.4h0M149.5 247.7h0M155.6 254.0h0M162.5 260.2h0M170.4 266.2h0M179.1 272.0h0M188.6 277.5h0M199.0 282.7h0M210.2 287.7h0M222.1 292.2h0M234.8 296.3h0M248.1 300.0h0M261.9 303.1h0M276.3 305.8h0M291.0 307.9h0M303.2 316.8h0M318.3 317.8h0M333.6 318.3h0M348.8 318.2h0M364.1 317.5h0M379.1 316.2h0M393.9 314.4h0M408.3 311.9h0M422.3 308.9h0M435.7 305.5h0M448.5 301.5h0M460.7 297.1h0M472.1 292.3h0M482.8 287.2h0M492.6 281.7h0M501.7 276.0h0M509.8 270.0h0M517.1 263.9h0M523.6 257.6h0M529.2 251.2h0M533.9 244.7h0M537.8 238.2h0M540.9 231.6h0M543.2 225.1h0M544.8 218.7h0M545.6 212.3h0M545.8 206.0h0M545.3 199.8h0M544.1 193.7h0M542.4 187.8h0M540.1 182.0h0M537.3 176.5h0M534.0 171.0h0M530.3 165.8h0M526.1 160.7h0M521.6 155.9h0M516.6 151.2h0M511.4 146.7h0M505.8 142.5h0M499.9 138.4h0M493.8 134.5h0M487.4 130.9h0M480.9 127.4h0M474.1 124.1h0M467.1 121.0h0M459.9 118.1h0M452.6 115.5h0M445.2 113.0h0M437.6 110.7h0M430.0 108.5h0M422.2 106.6h0M414.3 104.8h0M406.4 103.3h0M398.4 101.9h0M390.3 100.7h0M382.2 99.7h0M374.1 98.8h0M365.9 98.2h0M357.6 97.7h0M349.4 97.3h0M341.2 97.2h0M332.9 97.2h0M324.7 97.4h0M316.5 97.8h0M308.2 98.4h0M300.1 99.1h0M291.9 100.0h0M283.8 101.1h0M275.8 102.4h0M267.8 103.8h0M259.9 105.4h0M252.0 107.3h0M244.3 109.3h0M236.7 111.4h0M229.2 113.8h0M221.8 116.4h0M214.5 119.1h0M207.4 122.1h0M200.5 125.2h0M193.8 128.6h0M187.3 132.1h0M181.0 135.9h0M175.0 139.8h0M169.2 143.9h0M163.7 148.3h0M158.6 152.8h0M153.8 157.6h0M149.4 162.5h0M145.3 167.6h0M141.8 172.9h0M138.6 178.4h0M136.0 184.1h0M133.9 189.9h0M132.4 195.8h0M131.5 202.0h0M131.2 208.2h0M131.6 214.5h0M132.7 220.9h0M134.5 227.4h0M137.1 233.9h0M140.5 240.5h0M144.7 247.0h0M149.7 253.5h0M155.6 259.8h0M162.3 266.1h0M170.0 272.2h0M178.4 278.1h0M187.7 283.7h0M197.9 289.0h0M208.8 294.1h0M220.5 298.7h0M232.9 303.0h0M246.0 306.7h0M259.6 310.1h0M273.7 312.8h0M288.3 315.1h0M300.3 323.9h0M315.3 325.1h0M330.4 325.8h0M345.5 325.8h0M360.6 325.2h0M375.6 324.0h0M390.3 322.3h0M404.7 319.9h0M418.7 317.0h0M432.1 313.6h0M445.0 309.8h0M457.2 305.4h0M468.7 300.7h0M479.4 295.6h0M489.4 290.1h0M498.6 284.4h0M506.9 278.4h0M514.3 272.3h0M520.9 265.9h0M526.7 259.5h0M531.6 253.0h0M535.7 246.4h0M538.9 239.8h0M541.4 233.2h0M543.1 226.7h0M544.1 220.2h0M544.4 213.8h0M544.1 207.5h0M543.1 201.4h0M541.5 195.3h0M539.4 189.5h0M536.8 183.8h0M533.6 178.2h0M530.0 172.9h0M526.0 167.7h0M521.5 162.8h0M516.7 158.0h0M511.6 153.4h0M506.1 149.1h0M500.3 144.9h0M494.3 140.9h0M488.0 137.2h0M481.5 133.6h0M474.8 130.2h0M467.9 127.1h0M460.9 124.1h0M453.6 121.4h0M446.3 118.8h0M438.8 116.4h0M431.2 114.2h0M423.4 112.2h0M415.6 110.4h0M407.8 108.8h0M399.8 107.3h0M391.8 106.1h0M383.7 105.0h0M375.6 104.1h0M367.5 103.4h0M359.3 102.8h0M351.1 102.5h0M342.9 102.3h0M334.7 102.3h0M326.5 102.4h0M318.3 102.8h0M310.1 103.3h0M302.0 104.0h0M293.9 104.9h0M285.8 106.0h0M277.8 107.2h0M269.8 108.7h0M261.9 110.3h0M254.1 112.1h0M246.4 114.1h0M238.8 116.2h0M231.3 118.6h0M223.9 121.2h0M216.7 123.9h0M209.6 126.9h0M202.7 130.0h0M195.9 133.4h0M189.4 136.9h0M183.1 140.7h0M177.1 144.6h0M171.3 148.8h0M165.8 153.1h0M160.6 157.7h0M155.8 162.4h0M151.4 167.4h0M147.3 172.5h0M143.6 177.9h0M140.5 183.4h0M137.8 189.1h0M135.6 194.9h0M134.0 200.9h0M133.0 207.1h0M132.6 213.3h0M132.8 219.7h0M133.8 226.2h0M135.4 232.7h0M137.9 239.3h0M141.1 245.9h0M145.1 252.5h0M150.0 259.0h0M155.6 265.5h0M162.2 271.8h0M169.6 278.0h0M177.8 284.0h0M186.9 289.7h0M196.8 295.2h0M207.5 300.3h0M219.0 305.1h0M231.1 309.5h0M244.0 313.4h0M257.4 316.8h0M271.3 319.7h0M285.6 322.1h0M297.5 330.9h0M312.3 332.3h0M327.3 333.0h0M342.3 333.2h0M357.3 332.7h0M372.2 331.7h0M386.8 330.0h0M401.2 327.8h0M415.1 325.0h0M428.6 321.7h0M441.4 317.9h0M453.7 313.6h0M465.3 308.9h0M476.1 303.8h0M486.2 298.4h0M495.5 292.7h0M503.9 286.7h0M511.5 280.6h0M518.3 274.2h0M524.2 267.7h0M529.2 261.2h0M533.5 254.5h0M536.9 247.9h0M539.6 241.2h0M541.5 234.6h0M542.6 228.0h0M543.1 221.6h0M542.9 215.2h0M542.1 208.9h0M540.7 202.8h0M538.7 196.9h0M536.2 191.1h0M533.2 185.4h0M529.7 180.0h0M525.8 174.7h0M521.4 169.7h0M516.8 164.8h0M511.7 160.1h0M506.4 155.6h0M500.7 151.4h0M494.8 147.3h0M488.6 143.5h0M482.2 139.8h0M475.6 136.4h0M468.7 133.1h0M461.8 130.1h0M454.6 127.2h0M447.3 124.6h0M439.9 122.1h0M432.3 119.9h0M424.7 117.8h0M416.9 115.9h0M409.1 114.2h0M401.2 112.7h0M393.2 111.4h0M385.2 110.3h0M377.2 109.3h0M369.1 108.5h0M360.9 108.0h0M352.8 107.5h0M344.6 107.3h0M336.4 107.3h0M328.3 107.4h0M320.1 107.7h0M312.0 108.2h0M303.9 108.9h0M295.8 109.8h0M287.7 110.8h0M279.7 112.0h0M271.8 113.4h0M263.9 115.0h0M256.1 116.8h0M248.4 118.8h0M240.8 121.0h0M233.4 123.3h0M226.0 125.9h0M218.8 128.6h0M211.7 131.6h0M204.8 134.7h0M198.1 138.1h0M191.6 141.6h0M185.3 145.4h0M179.2 149.3h0M173.4 153.5h0M167.9 157.9h0M162.7 162.4h0M157.8 167.2h0M153.3 172.2h0M149.2 177.4h0M145.5 182.7h0M142.3 188.2h0M139.5 194.0h0M137.3 199.8h0M135.5 205.9h0M134.4 212.1h0M133.9 218.4h0M134.1 224.8h0M134.9 231.3h0M136.4 237.9h0M138.7 244.6h0M141.7 251.2h0M145.6 257.9h0M150.2 264.5h0M155.7 271.0h0M162.0 277.4h0M169.2 283.7h0M177.2 289.8h0M186.1 295.6h0M195.8 301.2h0M206.2 306.4h0M217.5 311.3h0M229.4 315.8h0M242.0 319.9h0M255.2 323.4h0M268.9 326.5h0M283.0 329.0h0M294.8 337.8h0M309.4 339.3h0M324.2 340.2h0M339.1 340.4h0M354.0 340.1h0M368.8 339.2h0M383.4 337.6h0M397.7 335.5h0M411.6 332.8h0M425.0 329.6h0M437.9 325.9h0M450.3 321.7h0M461.9 317.0h0M472.8 312.0h0M483.0 306.6h0M492.4 300.9h0M500.9 294.9h0M508.7 288.8h0M515.6 282.4h0M521.6 275.9h0M526.9 269.3h0M531.3 262.6h0M534.9 255.9h0M537.7 249.2h0M539.7 242.5h0M541.1 235.8h0M541.7 229.3h0M541.7 222.8h0M541.0 216.5h0M539.8 210.3h0M537.9 204.2h0M535.6 198.3h0M532.7 192.6h0M529.3 187.0h0M525.6 181.7h0M521.4 176.5h0M516.8 171.5h0M511.9 166.8h0M506.6 162.2h0M501.1 157.8h0M495.2 153.7h0M489.1 149.7h0M482.8 146.0h0M476.3 142.5h0M469.5 139.1h0M462.6 136.0h0M455.6 133.1h0M448.3 130.3h0M441.0 127.8h0M433.5 125.5h0M425.9 123.3h0M418.2 121.4h0M410.4 119.6h0M402.6 118.1h0M394.7 116.7h0M386.7 115.5h0M378.7 114.5h0M370.6 113.7h0M362.5 113.1h0M354.4 112.6h0M346.3 112.3h0M338.2 112.2h0M330.0 112.3h0M321.9 112.6h0M313.8 113.1h0M305.7 113.7h0M297.7 114.6h0M289.7 115.6h0M281.7 116.8h0M273.8 118.2h0M265.9 119.8h0M258.2 121.5h0M250.5 123.5h0M242.9 125.7h0M235.4 128.0h0M228.1 130.5h0M220.9 133.3h0M213.8 136.2h0M206.9 139.4h0M200.2 142.7h0M193.7 146.3h0M187.4 150.0h0M181.3 154.0h0M175.5 158.2h0M170.0 162.6h0M164.7 167.1h0M159.8 171.9h0M155.3 176.9h0M151.1 182.1h0M147.4 187.5h0M144.1 193.0h0M141.2 198.8h0M138.9 204.7h0M137.1 210.8h0M135.9 217.0h0M135.3 223.3h0M135.3 229.8h0M136.0 236.4h0M137.4 243.0h0M139.5 249.7h0M142.4 256.4h0M146.1 263.1h0M150.5 269.8h0M155.8 276.4h0M162.0 282.9h0M168.9 289.3h0M176.7 295.4h0M185.3 301.4h0M194.8 307.0h0M205.0 312.4h0M216.0 317.4h0M227.7 322.0h0M240.1 326.2h0M253.0 329.9h0M266.5 333.1h0M280.5 335.7h0M292.1 344.5h0M306.6 346.1h0M321.2 347.1h0M336.0 347.5h0M350.7 347.3h0M365.4 346.5h0M379.9 345.1h0M394.2 343.1h0M408.1 340.5h0M421.5 337.4h0M434.5 333.7h0M446.8 329.6h0M458.5 325.0h0M469.5 320.0h0M479.8 314.7h0M489.3 309.0h0M498.0 303.1h0M505.8 296.9h0M512.9 290.5h0M519.1 284.0h0M524.5 277.3h0M529.0 270.6h0M532.8 263.8h0M535.8 257.0h0M538.0 250.3h0M539.5 243.6h0M540.3 236.9h0M540.5 230.4h0M539.9 224.0h0M538.8 217.7h0M537.1 211.5h0M534.9 205.5h0M532.2 199.7h0M529.0 194.0h0M525.3 188.6h0M521.3 183.3h0M516.8 178.2h0M512.0 173.4h0M506.8 168.7h0M501.4 164.3h0M495.7 160.0h0M489.7 156.0h0M483.4 152.1h0M477.0 148.5h0M470.3 145.1h0M463.5 141.9h0M456.5 138.9h0M449.3 136.1h0M442.0 133.5h0M434.6 131.1h0M427.1 128.9h0M419.5 126.8h0M411.7 125.0h0M403.9 123.4h0M396.1 122.0h0M388.2 120.7h0M380.2 119.7h0M372.2 118.8h0M364.1 118.1h0M356.1 117.6h0M348.0 117.3h0M339.9 117.2h0M331.8 117.2h0M323.7 117.5h0M315.6 117.9h0M307.6 118.5h0M299.6 119.3h0M291.6 120.3h0M283.6 121.5h0M275.7 122.9h0M267.9 124.4h0M260.2 126.2h0M252.5 128.1h0M245.0 130.3h0M237.5 132.6h0M230.2 135.2h0M223.0 137.9h0M215.9 140.8h0M209.0 144.0h0M202.3 147.3h0M195.8 150.9h0M189.4 154.6h0M183.4 158.6h0M177.5 162.8h0M172.0 167.2h0M166.7 171.8h0M161.8 176.6h0M157.2 181.5h0M153.0 186.7h0M149.2 192.1h0M145.9 197.7h0M143.0 203.5h0M140.6 209.4h0M138.7 215.5h0M137.4 221.8h0M136.7 228.2h0M136.6 234.7h0M137.1 241.3h0M138.4 248.0h0M140.4 254.7h0M143.1 261.5h0M146.6 268.3h0M150.9 275.0h0M156.0 281.7h0M161.9 288.3h0M168.6 294.7h0M176.2 301.0h0M184.6 307.0h0M193.8 312.8h0M203.8 318.2h0M214.6 323.3h0M226.1 328.1h0M238.2 332.4h0M251.0 336.2h0M264.2 339.5h0M278.0 342.3h0M289.5 351.0h0M303.8 352.8h0M318.3 354.0h0M332.9 354.5h0M347.5 354.4h0M362.1 353.7h0M376.6 352.4h0M390.8 350.5h0M404.6 348.1h0M418.1 345.0h0M431.0 341.5h0M443.4 337.4h0M455.2 332.9h0M466.3 328.0h0M476.6 322.6h0M486.2 317.0h0M495.0 311.1h0M503.0 304.9h0M510.2 298.5h0M516.6 291.9h0M522.1 285.3h0M526.8 278.5h0M530.7 271.7h0M533.9 264.9h0M536.3 258.0h0M537.9 251.3h0M538.9 244.5h0M539.2 237.9h0M538.8 231.4h0M537.9 225.0h0M536.3 218.8h0M534.3 212.7h0M531.7 206.8h0M528.6 201.0h0M525.1 195.5h0M521.1 190.1h0M516.8 184.9h0M512.1 180.0h0M507.0 175.2h0M501.7 170.7h0M496.1 166.3h0M490.2 162.2h0M484.0 158.3h0M477.7 154.6h0M471.1 151.0h0M464.3 147.8h0M457.4 144.7h0M450.3 141.8h0M443.1 139.1h0M435.7 136.6h0M428.3 134.3h0M420.7 132.3h0M413.0 130.4h0M405.3 128.7h0M397.5 127.2h0M389.6 125.9h0M381.7 124.8h0M373.7 123.9h0M365.7 123.1h0M357.7 122.6h0M349.6 122.2h0M341.6 122.1h0M333.5 122.1h0M325.5 122.3h0M317.4 122.7h0M309.4 123.3h0M301.4 124.1h0M293.5 125.0h0M285.6 126.2h0M277.7 127.5h0M269.9 129.1h0M262.2 130.8h0M254.5 132.7h0M247.0 134.9h0M239.5 137.2h0M232.2 139.7h0M225.0 142.4h0M218.0 145.4h0M211.1 148.5h0M204.4 151.8h0M197.8 155.4h0M191.5 159.2h0M185.4 163.1h0M179.6 167.3h0M174.0 171.7h0M168.8 176.3h0M163.8 181.1h0M159.2 186.1h0M154.9 191.3h0M151.1 196.7h0M147.7 202.3h0M144.7 208.1h0M142.2 214.1h0M140.3 220.2h0M138.8 226.5h0M138.0 232.9h0M137.8 239.5h0M138.3 246.1h0M139.4 252.8h0M141.2 259.6h0M143.8 266.4h0M147.1 273.3h0M151.2 280.1h0M156.1 286.8h0M161.9 293.5h0M168.4 300.0h0M175.8 306.3h0M184.0 312.5h0M192.9 318.3h0M202.7 323.9h0M213.2 329.1h0M224.5 334.0h0M236.4 338.4h0M248.9 342.3h0M262.0 345.8h0M275.6 348.7h0M286.9 357.4h0M301.0 359.3h0M315.4 360.6h0M329.8 361.3h0M344.4 361.4h0M358.9 360.8h0M373.2 359.6h0M387.4 357.9h0M401.2 355.5h0M414.7 352.5h0M427.6 349.1h0M440.0 345.1h0M451.9 340.6h0M463.0 335.8h0M473.4 330.5h0M483.1 324.9h0M492.1 319.0h0M500.2 312.8h0M507.5 306.4h0M514.0 299.9h0M519.7 293.2h0M524.6 286.4h0M528.7 279.5h0M532.0 272.6h0M534.5 265.7h0M536.3 258.9h0M537.5 252.1h0M537.9 245.4h0M537.7 238.8h0M536.9 232.3h0M535.5 226.0h0M533.6 219.8h0M531.1 213.8h0M528.2 208.0h0M524.8 202.3h0M521.0 196.8h0M516.7 191.6h0M512.2 186.5h0M507.2 181.7h0M502.0 177.0h0M496.5 172.6h0M490.7 168.4h0M484.6 164.4h0M478.3 160.6h0M471.8 157.0h0M465.2 153.6h0M458.3 150.4h0M451.3 147.5h0M444.1 144.7h0M436.8 142.2h0M429.4 139.8h0M421.9 137.7h0M414.3 135.7h0M406.6 134.0h0M398.9 132.4h0M391.0 131.1h0M383.2 129.9h0M375.2 128.9h0M367.3 128.1h0M359.3 127.6h0M351.3 127.2h0M343.3 126.9h0M335.3 126.9h0M327.2 127.1h0M319.2 127.5h0M311.2 128.0h0M303.3 128.8h0M295.3 129.7h0M287.5 130.8h0M279.6 132.1h0M271.9 133.7h0M264.1 135.4h0M256.5 137.3h0M249.0 139.4h0M241.6 141.7h0M234.3 144.2h0M227.1 146.9h0M220.0 149.8h0M213.1 153.0h0M206.4 156.3h0M199.9 159.9h0M193.6 163.6h0M187.5 167.6h0M181.6 171.8h0M176.0 176.2h0M170.7 180.8h0M165.8 185.6h0M161.1 190.6h0M156.8 195.8h0M152.9 201.2h0M149.4 206.9h0M146.4 212.7h0M143.9 218.6h0M141.8 224.8h0M140.3 231.1h0M139.4 237.6h0M139.1 244.1h0M139.4 250.8h0M140.4 257.6h0M142.1 264.4h0M144.5 271.3h0M147.7 278.2h0M151.6 285.1h0M156.3 291.9h0M161.8 298.6h0M168.2 305.2h0M175.4 311.6h0M183.3 317.8h0M192.1 323.8h0M201.6 329.5h0M211.9 334.8h0M223.0 339.7h0M234.7 344.3h0M247.0 348.3h0M259.8 351.9h0M273.2 355.0h0" stroke="#f6e80c" stroke-width="3.150" stroke-linecap="round" fill="none"/><path d="M354.5 90.3L317.3 163.7L316.7 253.3L353.1 179.5z" fill="none" stroke="#2c6cb4" stroke-width="1.200"/><path d="M285.5 115.3L394.2 128.5L385.5 215.1L287.0 199.9z" fill="none" stroke="#3cb64c" stroke-width="1.400"/><path d="M303.2 136.7L392.8 148.5L376.5 202.5L273.3 186.5z" fill="none" stroke="#d2222e" stroke-width="1.400"/><path d="M307.5 112.5L318.5 108.5L367.5 112.5L367.5 217.5L353.5 224.5L307.5 216.5z" fill="#8a8a80" opacity=".32"/><rect x="314.1" y="121.0" width="47" height="92" rx="15" ry="11" fill="url(#vg)" opacity=".8" filter="url(#b1)"/><ellipse cx="337.5" cy="126.0" rx="21" ry="5" fill="#fff" opacity=".35" filter="url(#b1)"/><path d="M346.5 131.5Q328.5 149.5 330.5 172.5T344.5 203.5" stroke="#fff" stroke-width="6" fill="none" opacity=".35" filter="url(#b1)"/><path d="M346.5 131.5Q328.5 149.5 330.5 172.5T344.5 203.5" stroke="#9a9a9a" stroke-width="2.200" fill="none" opacity=".5" stroke-dasharray="1.500 2.500" filter="url(#b1)"/><path d="M324.5 137.5q4 14 -2 30M352.5 142.5q-5 20 3 44M339.5 187.5q6 8 2 18" stroke="#8c8c8c" stroke-width="3" fill="none" opacity=".35" filter="url(#b1)"/><path d="M354.5 90.3L317.3 163.7L317.3 187.5" fill="none" stroke="#2c6cb4" stroke-width="1.100" opacity=".9"/><path d="M314.5 193.0L365.5 200.8" stroke="#e03040" stroke-width="1.200" stroke-dasharray="2.500 2" opacity=".9"/><path d="M318.5 119.0L366.5 125.1" stroke="#7be07b" stroke-width="1" stroke-dasharray="2 2" opacity=".7"/><path d="M149.6 207.7L411.9 89.7" stroke="url(#fl)" stroke-width="1.100"/><path d="M149.6 207.7L410.3 106.3" stroke="url(#fl)" stroke-width="1.100"/><path d="M149.6 207.7L508.2 142.5" stroke="url(#fl)" stroke-width="1.100"/><path d="M149.6 207.7L503.7 162.8" stroke="url(#fl)" stroke-width="1.100"/><path d="M411.9 89.7Q460.0 104.7 508.2 142.5L503.7 162.8Q457.0 124.4 410.3 106.3z" fill="url(#dg)" stroke="#e8e8e8" stroke-width="1"/></svg>
<svg style="left:1556px;top:1176px;" width="32" height="36" viewBox="0 0 32 36"><path d="M4.1 13.0L7.5 3.6L28.9 5.5L24.0 16.4z" fill="#10107c"/><path d="M24.0 16.4L28.9 5.5L27.6 25.0L24.0 33.0z" fill="#451414"/><path d="M4.1 13.0L24.0 16.4L24.0 33.0L4.0 29.9z" fill="#0e7c0e"/><text x="0" y="4.900" font-family="DejaVu Sans, sans-serif" font-size="13.400" fill="#c9a9c9" text-anchor="middle" transform="translate(14.3 25.0) skewY(9)">L</text><text x="0" y="3.650" font-family="DejaVu Sans, sans-serif" font-size="10" fill="#a9a97c" text-anchor="middle" transform="translate(16.9 9.1) rotate(4) scale(1.780 0.660) rotate(90)">H</text></svg>

</body></html>
